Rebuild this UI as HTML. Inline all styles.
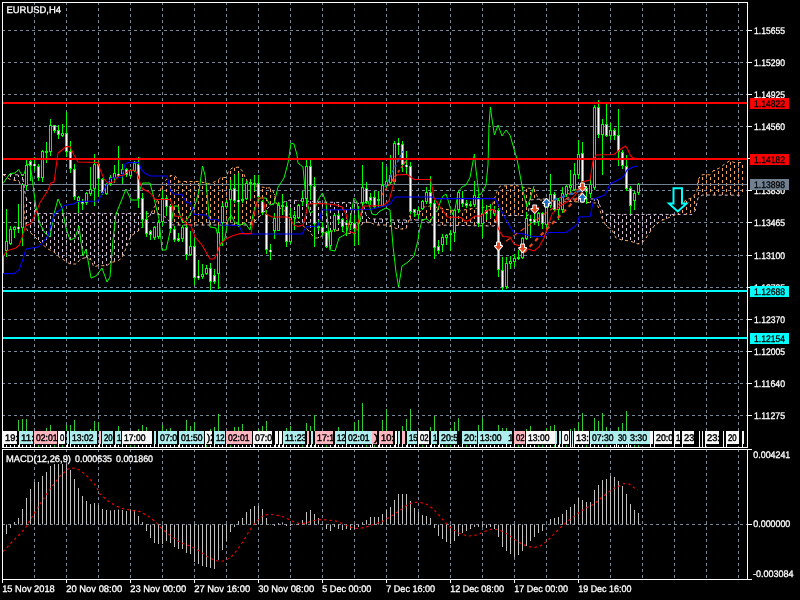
<!DOCTYPE html>
<html><head><meta charset="utf-8"><title>EURUSD,H4</title>
<style>
html,body{margin:0;padding:0;background:#000;width:800px;height:600px;overflow:hidden}
svg{display:block;font-family:"Liberation Sans",sans-serif;will-change:transform}
text{text-rendering:geometricPrecision}
text[fill="#fff"]{stroke:#fff;stroke-width:0.3px}
text[fill="#000"]:not([clip-path]){stroke:#000;stroke-width:0.3px}
</style></head><body>
<svg width="800" height="600" viewBox="0 0 800 600">
<rect width="800" height="600" fill="#000"/>
<path d="M34.5 3V447 M34.5 450V579 M66.5 3V447 M66.5 450V579 M98.5 3V447 M98.5 450V579 M130.5 3V447 M130.5 450V579 M162.5 3V447 M162.5 450V579 M194.5 3V447 M194.5 450V579 M226.5 3V447 M226.5 450V579 M258.5 3V447 M258.5 450V579 M290.5 3V447 M290.5 450V579 M322.5 3V447 M322.5 450V579 M354.5 3V447 M354.5 450V579 M386.5 3V447 M386.5 450V579 M418.5 3V447 M418.5 450V579 M450.5 3V447 M450.5 450V579 M482.5 3V447 M482.5 450V579 M514.5 3V447 M514.5 450V579 M546.5 3V447 M546.5 450V579 M578.5 3V447 M578.5 450V579 M610.5 3V447 M610.5 450V579 M642.5 3V447 M642.5 450V579 M674.5 3V447 M674.5 450V579 M706.5 3V447 M706.5 450V579 M738.5 3V447 M738.5 450V579 M3 30.5H747 M3 62.5H747 M3 94.5H747 M3 126.5H747 M3 158.5H747 M3 190.5H747 M3 222.5H747 M3 255.5H747 M3 287.5H747 M3 319.5H747 M3 351.5H747 M3 383.5H747 M3 415.5H747" stroke="#778899" stroke-width="1" stroke-dasharray="3 3" stroke-dashoffset="1" fill="none" shape-rendering="crispEdges"/>
<path d="M3 524.5H747" stroke="#778899" stroke-width="1" stroke-dasharray="3 3" stroke-dashoffset="1" fill="none" shape-rendering="crispEdges"/>
<path d="M6.5 174.6V176.6" stroke="#d8bfd8" stroke-width="1" stroke-dasharray="3 3" stroke-dashoffset="3.6" fill="none"/>
<path d="M10.5 174.7V179.5" stroke="#d8bfd8" stroke-width="1" stroke-dasharray="3 3" stroke-dashoffset="0.7" fill="none"/>
<path d="M14.5 174.8V180.2" stroke="#d8bfd8" stroke-width="1" stroke-dasharray="3 3" stroke-dashoffset="3.8" fill="none"/>
<path d="M18.5 174.9V180.8" stroke="#d8bfd8" stroke-width="1" stroke-dasharray="3 3" stroke-dashoffset="0.9" fill="none"/>
<path d="M22.5 175.0V190.0" stroke="#d8bfd8" stroke-width="1" stroke-dasharray="3 3" stroke-dashoffset="4.0" fill="none"/>
<path d="M26.5 197.0V224.0" stroke="#d8bfd8" stroke-width="1" stroke-dasharray="3 3" stroke-dashoffset="5.0" fill="none"/>
<path d="M30.5 202.5V232.4" stroke="#d8bfd8" stroke-width="1" stroke-dasharray="3 3" stroke-dashoffset="1.5" fill="none"/>
<path d="M34.5 203.2V236.0" stroke="#d8bfd8" stroke-width="1" stroke-dasharray="3 3" stroke-dashoffset="5.2" fill="none"/>
<path d="M38.5 213.6V240.0" stroke="#d8bfd8" stroke-width="1" stroke-dasharray="3 3" stroke-dashoffset="0.6" fill="none"/>
<path d="M42.5 213.6V244.0" stroke="#d8bfd8" stroke-width="1" stroke-dasharray="3 3" stroke-dashoffset="3.6" fill="none"/>
<path d="M46.5 213.6V247.3" stroke="#d8bfd8" stroke-width="1" stroke-dasharray="3 3" stroke-dashoffset="0.6" fill="none"/>
<path d="M50.5 213.6V250.0" stroke="#d8bfd8" stroke-width="1" stroke-dasharray="3 3" stroke-dashoffset="3.6" fill="none"/>
<path d="M54.5 213.6V252.0" stroke="#d8bfd8" stroke-width="1" stroke-dasharray="3 3" stroke-dashoffset="0.6" fill="none"/>
<path d="M58.5 213.6V255.7" stroke="#d8bfd8" stroke-width="1" stroke-dasharray="3 3" stroke-dashoffset="3.6" fill="none"/>
<path d="M62.5 213.6V258.8" stroke="#d8bfd8" stroke-width="1" stroke-dasharray="3 3" stroke-dashoffset="0.6" fill="none"/>
<path d="M66.5 213.6V261.3" stroke="#d8bfd8" stroke-width="1" stroke-dasharray="3 3" stroke-dashoffset="3.6" fill="none"/>
<path d="M70.5 213.6V264.0" stroke="#d8bfd8" stroke-width="1" stroke-dasharray="3 3" stroke-dashoffset="0.6" fill="none"/>
<path d="M74.5 213.6V264.0" stroke="#d8bfd8" stroke-width="1" stroke-dasharray="3 3" stroke-dashoffset="3.6" fill="none"/>
<path d="M78.5 213.6V261.8" stroke="#d8bfd8" stroke-width="1" stroke-dasharray="3 3" stroke-dashoffset="0.6" fill="none"/>
<path d="M82.5 213.6V258.6" stroke="#d8bfd8" stroke-width="1" stroke-dasharray="3 3" stroke-dashoffset="3.6" fill="none"/>
<path d="M86.5 213.6V257.6" stroke="#d8bfd8" stroke-width="1" stroke-dasharray="3 3" stroke-dashoffset="0.6" fill="none"/>
<path d="M90.5 213.6V259.4" stroke="#d8bfd8" stroke-width="1" stroke-dasharray="3 3" stroke-dashoffset="3.6" fill="none"/>
<path d="M94.5 213.6V266.7" stroke="#d8bfd8" stroke-width="1" stroke-dasharray="3 3" stroke-dashoffset="0.6" fill="none"/>
<path d="M98.5 213.6V265.7" stroke="#d8bfd8" stroke-width="1" stroke-dasharray="3 3" stroke-dashoffset="3.6" fill="none"/>
<path d="M102.5 213.6V265.7" stroke="#d8bfd8" stroke-width="1" stroke-dasharray="3 3" stroke-dashoffset="0.6" fill="none"/>
<path d="M106.5 213.6V265.7" stroke="#d8bfd8" stroke-width="1" stroke-dasharray="3 3" stroke-dashoffset="3.6" fill="none"/>
<path d="M110.5 213.6V263.2" stroke="#d8bfd8" stroke-width="1" stroke-dasharray="3 3" stroke-dashoffset="0.6" fill="none"/>
<path d="M114.5 213.6V261.8" stroke="#d8bfd8" stroke-width="1" stroke-dasharray="3 3" stroke-dashoffset="3.6" fill="none"/>
<path d="M118.5 213.6V260.7" stroke="#d8bfd8" stroke-width="1" stroke-dasharray="3 3" stroke-dashoffset="0.6" fill="none"/>
<path d="M122.5 213.6V258.0" stroke="#d8bfd8" stroke-width="1" stroke-dasharray="3 3" stroke-dashoffset="3.6" fill="none"/>
<path d="M126.5 213.6V248.2" stroke="#d8bfd8" stroke-width="1" stroke-dasharray="3 3" stroke-dashoffset="0.6" fill="none"/>
<path d="M130.5 213.6V237.8" stroke="#d8bfd8" stroke-width="1" stroke-dasharray="3 3" stroke-dashoffset="3.6" fill="none"/>
<path d="M134.5 213.6V233.9" stroke="#d8bfd8" stroke-width="1" stroke-dasharray="3 3" stroke-dashoffset="0.6" fill="none"/>
<path d="M138.5 213.6V231.0" stroke="#d8bfd8" stroke-width="1" stroke-dasharray="3 3" stroke-dashoffset="3.6" fill="none"/>
<path d="M142.5 213.6V227.3" stroke="#d8bfd8" stroke-width="1" stroke-dasharray="3 3" stroke-dashoffset="0.6" fill="none"/>
<path d="M146.5 213.6V220.5" stroke="#d8bfd8" stroke-width="1" stroke-dasharray="3 3" stroke-dashoffset="3.6" fill="none"/>
<path d="M150.5 213.6V215.5" stroke="#d8bfd8" stroke-width="1" stroke-dasharray="3 3" stroke-dashoffset="0.6" fill="none"/>
<path d="M154.5 207.6V213.6" stroke="#f4a460" stroke-width="1" stroke-dasharray="3 3" stroke-dashoffset="3.6" fill="none"/>
<path d="M158.5 198.5V214.4" stroke="#f4a460" stroke-width="1" stroke-dasharray="3 3" stroke-dashoffset="3.5" fill="none"/>
<path d="M162.5 184.0V215.5" stroke="#f4a460" stroke-width="1" stroke-dasharray="3 3" stroke-dashoffset="4.0" fill="none"/>
<path d="M166.5 180.0V217.5" stroke="#f4a460" stroke-width="1" stroke-dasharray="3 3" stroke-dashoffset="3.0" fill="none"/>
<path d="M170.5 175.6V222.1" stroke="#f4a460" stroke-width="1" stroke-dasharray="3 3" stroke-dashoffset="1.6" fill="none"/>
<path d="M174.5 175.6V225.0" stroke="#f4a460" stroke-width="1" stroke-dasharray="3 3" stroke-dashoffset="4.6" fill="none"/>
<path d="M178.5 180.0V225.0" stroke="#f4a460" stroke-width="1" stroke-dasharray="3 3" stroke-dashoffset="0.0" fill="none"/>
<path d="M182.5 181.6V225.0" stroke="#f4a460" stroke-width="1" stroke-dasharray="3 3" stroke-dashoffset="4.6" fill="none"/>
<path d="M186.5 181.5V225.0" stroke="#f4a460" stroke-width="1" stroke-dasharray="3 3" stroke-dashoffset="1.5" fill="none"/>
<path d="M190.5 181.5V225.0" stroke="#f4a460" stroke-width="1" stroke-dasharray="3 3" stroke-dashoffset="4.5" fill="none"/>
<path d="M194.5 181.5V225.0" stroke="#f4a460" stroke-width="1" stroke-dasharray="3 3" stroke-dashoffset="1.5" fill="none"/>
<path d="M198.5 181.5V225.0" stroke="#f4a460" stroke-width="1" stroke-dasharray="3 3" stroke-dashoffset="4.5" fill="none"/>
<path d="M202.5 182.1V225.0" stroke="#f4a460" stroke-width="1" stroke-dasharray="3 3" stroke-dashoffset="2.1" fill="none"/>
<path d="M206.5 183.0V225.0" stroke="#f4a460" stroke-width="1" stroke-dasharray="3 3" stroke-dashoffset="0.0" fill="none"/>
<path d="M210.5 184.0V225.0" stroke="#f4a460" stroke-width="1" stroke-dasharray="3 3" stroke-dashoffset="4.0" fill="none"/>
<path d="M214.5 182.0V225.0" stroke="#f4a460" stroke-width="1" stroke-dasharray="3 3" stroke-dashoffset="5.0" fill="none"/>
<path d="M218.5 180.2V225.0" stroke="#f4a460" stroke-width="1" stroke-dasharray="3 3" stroke-dashoffset="0.2" fill="none"/>
<path d="M222.5 177.5V225.0" stroke="#f4a460" stroke-width="1" stroke-dasharray="3 3" stroke-dashoffset="0.5" fill="none"/>
<path d="M226.5 177.5V225.0" stroke="#f4a460" stroke-width="1" stroke-dasharray="3 3" stroke-dashoffset="3.5" fill="none"/>
<path d="M230.5 170.0V225.0" stroke="#f4a460" stroke-width="1" stroke-dasharray="3 3" stroke-dashoffset="5.0" fill="none"/>
<path d="M234.5 167.7V225.0" stroke="#f4a460" stroke-width="1" stroke-dasharray="3 3" stroke-dashoffset="5.7" fill="none"/>
<path d="M238.5 167.1V225.0" stroke="#f4a460" stroke-width="1" stroke-dasharray="3 3" stroke-dashoffset="2.1" fill="none"/>
<path d="M242.5 170.8V225.0" stroke="#f4a460" stroke-width="1" stroke-dasharray="3 3" stroke-dashoffset="2.8" fill="none"/>
<path d="M246.5 179.0V225.0" stroke="#f4a460" stroke-width="1" stroke-dasharray="3 3" stroke-dashoffset="2.0" fill="none"/>
<path d="M250.5 183.8V225.0" stroke="#f4a460" stroke-width="1" stroke-dasharray="3 3" stroke-dashoffset="3.8" fill="none"/>
<path d="M254.5 185.2V222.0" stroke="#f4a460" stroke-width="1" stroke-dasharray="3 3" stroke-dashoffset="2.2" fill="none"/>
<path d="M258.5 186.3V218.0" stroke="#f4a460" stroke-width="1" stroke-dasharray="3 3" stroke-dashoffset="0.3" fill="none"/>
<path d="M262.5 187.1V214.0" stroke="#f4a460" stroke-width="1" stroke-dasharray="3 3" stroke-dashoffset="4.1" fill="none"/>
<path d="M266.5 187.6V210.0" stroke="#f4a460" stroke-width="1" stroke-dasharray="3 3" stroke-dashoffset="1.6" fill="none"/>
<path d="M270.5 188.0V206.0" stroke="#f4a460" stroke-width="1" stroke-dasharray="3 3" stroke-dashoffset="5.0" fill="none"/>
<path d="M274.5 194.0V204.0" stroke="#f4a460" stroke-width="1" stroke-dasharray="3 3" stroke-dashoffset="2.0" fill="none"/>
<path d="M278.5 204.0V205.5" stroke="#d8bfd8" stroke-width="1" stroke-dasharray="3 3" stroke-dashoffset="3.0" fill="none"/>
<path d="M282.5 203.0V209.2" stroke="#d8bfd8" stroke-width="1" stroke-dasharray="3 3" stroke-dashoffset="5.0" fill="none"/>
<path d="M286.5 201.3V211.8" stroke="#d8bfd8" stroke-width="1" stroke-dasharray="3 3" stroke-dashoffset="0.3" fill="none"/>
<path d="M290.5 200.0V214.5" stroke="#d8bfd8" stroke-width="1" stroke-dasharray="3 3" stroke-dashoffset="2.0" fill="none"/>
<path d="M294.5 200.3V217.5" stroke="#d8bfd8" stroke-width="1" stroke-dasharray="3 3" stroke-dashoffset="5.3" fill="none"/>
<path d="M298.5 200.5V221.0" stroke="#d8bfd8" stroke-width="1" stroke-dasharray="3 3" stroke-dashoffset="2.5" fill="none"/>
<path d="M302.5 200.8V224.8" stroke="#d8bfd8" stroke-width="1" stroke-dasharray="3 3" stroke-dashoffset="5.8" fill="none"/>
<path d="M306.5 201.1V228.4" stroke="#d8bfd8" stroke-width="1" stroke-dasharray="3 3" stroke-dashoffset="3.1" fill="none"/>
<path d="M310.5 201.3V232.0" stroke="#d8bfd8" stroke-width="1" stroke-dasharray="3 3" stroke-dashoffset="0.3" fill="none"/>
<path d="M314.5 201.6V238.0" stroke="#d8bfd8" stroke-width="1" stroke-dasharray="3 3" stroke-dashoffset="3.6" fill="none"/>
<path d="M318.5 201.9V238.0" stroke="#d8bfd8" stroke-width="1" stroke-dasharray="3 3" stroke-dashoffset="0.9" fill="none"/>
<path d="M322.5 202.0V235.5" stroke="#d8bfd8" stroke-width="1" stroke-dasharray="3 3" stroke-dashoffset="4.0" fill="none"/>
<path d="M326.5 202.1V232.5" stroke="#d8bfd8" stroke-width="1" stroke-dasharray="3 3" stroke-dashoffset="1.1" fill="none"/>
<path d="M330.5 202.2V231.5" stroke="#d8bfd8" stroke-width="1" stroke-dasharray="3 3" stroke-dashoffset="4.2" fill="none"/>
<path d="M334.5 202.3V230.8" stroke="#d8bfd8" stroke-width="1" stroke-dasharray="3 3" stroke-dashoffset="1.3" fill="none"/>
<path d="M338.5 202.4V230.2" stroke="#d8bfd8" stroke-width="1" stroke-dasharray="3 3" stroke-dashoffset="4.4" fill="none"/>
<path d="M342.5 202.5V231.0" stroke="#d8bfd8" stroke-width="1" stroke-dasharray="3 3" stroke-dashoffset="1.5" fill="none"/>
<path d="M346.5 202.6V233.0" stroke="#d8bfd8" stroke-width="1" stroke-dasharray="3 3" stroke-dashoffset="4.6" fill="none"/>
<path d="M350.5 202.7V233.4" stroke="#d8bfd8" stroke-width="1" stroke-dasharray="3 3" stroke-dashoffset="1.7" fill="none"/>
<path d="M354.5 202.8V233.9" stroke="#d8bfd8" stroke-width="1" stroke-dasharray="3 3" stroke-dashoffset="4.8" fill="none"/>
<path d="M358.5 202.9V229.5" stroke="#d8bfd8" stroke-width="1" stroke-dasharray="3 3" stroke-dashoffset="1.9" fill="none"/>
<path d="M362.5 203.0V224.2" stroke="#d8bfd8" stroke-width="1" stroke-dasharray="3 3" stroke-dashoffset="5.0" fill="none"/>
<path d="M366.5 215.0V222.5" stroke="#d8bfd8" stroke-width="1" stroke-dasharray="3 3" stroke-dashoffset="2.0" fill="none"/>
<path d="M370.5 219.0V222.4" stroke="#d8bfd8" stroke-width="1" stroke-dasharray="3 3" stroke-dashoffset="3.0" fill="none"/>
<path d="M374.5 219.0V224.1" stroke="#d8bfd8" stroke-width="1" stroke-dasharray="3 3" stroke-dashoffset="0.0" fill="none"/>
<path d="M378.5 219.0V225.0" stroke="#d8bfd8" stroke-width="1" stroke-dasharray="3 3" stroke-dashoffset="3.0" fill="none"/>
<path d="M382.5 219.0V225.0" stroke="#d8bfd8" stroke-width="1" stroke-dasharray="3 3" stroke-dashoffset="0.0" fill="none"/>
<path d="M386.5 219.0V225.0" stroke="#d8bfd8" stroke-width="1" stroke-dasharray="3 3" stroke-dashoffset="3.0" fill="none"/>
<path d="M390.5 219.5V226.3" stroke="#d8bfd8" stroke-width="1" stroke-dasharray="3 3" stroke-dashoffset="0.5" fill="none"/>
<path d="M394.5 220.0V227.7" stroke="#d8bfd8" stroke-width="1" stroke-dasharray="3 3" stroke-dashoffset="4.0" fill="none"/>
<path d="M398.5 220.0V229.0" stroke="#d8bfd8" stroke-width="1" stroke-dasharray="3 3" stroke-dashoffset="1.0" fill="none"/>
<path d="M402.5 220.0V229.0" stroke="#d8bfd8" stroke-width="1" stroke-dasharray="3 3" stroke-dashoffset="4.0" fill="none"/>
<path d="M406.5 220.0V229.0" stroke="#d8bfd8" stroke-width="1" stroke-dasharray="3 3" stroke-dashoffset="1.0" fill="none"/>
<path d="M410.5 215.0V220.0" stroke="#f4a460" stroke-width="1" stroke-dasharray="3 3" stroke-dashoffset="5.0" fill="none"/>
<path d="M414.5 215.0V220.0" stroke="#f4a460" stroke-width="1" stroke-dasharray="3 3" stroke-dashoffset="2.0" fill="none"/>
<path d="M418.5 213.5V220.0" stroke="#f4a460" stroke-width="1" stroke-dasharray="3 3" stroke-dashoffset="3.5" fill="none"/>
<path d="M422.5 209.5V220.0" stroke="#f4a460" stroke-width="1" stroke-dasharray="3 3" stroke-dashoffset="2.5" fill="none"/>
<path d="M426.5 206.7V221.2" stroke="#f4a460" stroke-width="1" stroke-dasharray="3 3" stroke-dashoffset="2.7" fill="none"/>
<path d="M430.5 206.0V223.8" stroke="#f4a460" stroke-width="1" stroke-dasharray="3 3" stroke-dashoffset="5.0" fill="none"/>
<path d="M434.5 206.8V225.0" stroke="#f4a460" stroke-width="1" stroke-dasharray="3 3" stroke-dashoffset="2.8" fill="none"/>
<path d="M438.5 207.6V225.1" stroke="#f4a460" stroke-width="1" stroke-dasharray="3 3" stroke-dashoffset="0.6" fill="none"/>
<path d="M442.5 208.4V225.2" stroke="#f4a460" stroke-width="1" stroke-dasharray="3 3" stroke-dashoffset="4.4" fill="none"/>
<path d="M446.5 209.2V225.2" stroke="#f4a460" stroke-width="1" stroke-dasharray="3 3" stroke-dashoffset="2.2" fill="none"/>
<path d="M450.5 210.0V225.3" stroke="#f4a460" stroke-width="1" stroke-dasharray="3 3" stroke-dashoffset="0.0" fill="none"/>
<path d="M454.5 210.4V225.4" stroke="#f4a460" stroke-width="1" stroke-dasharray="3 3" stroke-dashoffset="3.4" fill="none"/>
<path d="M458.5 210.8V225.4" stroke="#f4a460" stroke-width="1" stroke-dasharray="3 3" stroke-dashoffset="0.8" fill="none"/>
<path d="M462.5 210.5V225.5" stroke="#f4a460" stroke-width="1" stroke-dasharray="3 3" stroke-dashoffset="3.5" fill="none"/>
<path d="M466.5 209.5V225.6" stroke="#f4a460" stroke-width="1" stroke-dasharray="3 3" stroke-dashoffset="5.5" fill="none"/>
<path d="M470.5 208.8V225.6" stroke="#f4a460" stroke-width="1" stroke-dasharray="3 3" stroke-dashoffset="1.8" fill="none"/>
<path d="M474.5 208.5V225.7" stroke="#f4a460" stroke-width="1" stroke-dasharray="3 3" stroke-dashoffset="4.5" fill="none"/>
<path d="M478.5 208.2V225.8" stroke="#f4a460" stroke-width="1" stroke-dasharray="3 3" stroke-dashoffset="1.2" fill="none"/>
<path d="M482.5 207.7V225.8" stroke="#f4a460" stroke-width="1" stroke-dasharray="3 3" stroke-dashoffset="3.7" fill="none"/>
<path d="M486.5 207.0V225.9" stroke="#f4a460" stroke-width="1" stroke-dasharray="3 3" stroke-dashoffset="0.0" fill="none"/>
<path d="M490.5 206.3V225.9" stroke="#f4a460" stroke-width="1" stroke-dasharray="3 3" stroke-dashoffset="2.3" fill="none"/>
<path d="M494.5 200.2V226.0" stroke="#f4a460" stroke-width="1" stroke-dasharray="3 3" stroke-dashoffset="5.2" fill="none"/>
<path d="M498.5 189.7V215.5" stroke="#f4a460" stroke-width="1" stroke-dasharray="3 3" stroke-dashoffset="3.7" fill="none"/>
<path d="M502.5 186.1V215.5" stroke="#f4a460" stroke-width="1" stroke-dasharray="3 3" stroke-dashoffset="3.1" fill="none"/>
<path d="M506.5 185.9V215.5" stroke="#f4a460" stroke-width="1" stroke-dasharray="3 3" stroke-dashoffset="5.9" fill="none"/>
<path d="M510.5 185.8V215.5" stroke="#f4a460" stroke-width="1" stroke-dasharray="3 3" stroke-dashoffset="2.8" fill="none"/>
<path d="M514.5 185.6V215.5" stroke="#f4a460" stroke-width="1" stroke-dasharray="3 3" stroke-dashoffset="5.6" fill="none"/>
<path d="M518.5 186.0V215.5" stroke="#f4a460" stroke-width="1" stroke-dasharray="3 3" stroke-dashoffset="3.0" fill="none"/>
<path d="M522.5 187.0V215.5" stroke="#f4a460" stroke-width="1" stroke-dasharray="3 3" stroke-dashoffset="1.0" fill="none"/>
<path d="M526.5 187.8V215.5" stroke="#f4a460" stroke-width="1" stroke-dasharray="3 3" stroke-dashoffset="4.8" fill="none"/>
<path d="M530.5 188.4V200.0" stroke="#f4a460" stroke-width="1" stroke-dasharray="3 3" stroke-dashoffset="2.4" fill="none"/>
<path d="M534.5 189.0V199.6" stroke="#f4a460" stroke-width="1" stroke-dasharray="3 3" stroke-dashoffset="0.0" fill="none"/>
<path d="M550.5 199.0V200.5" stroke="#d8bfd8" stroke-width="1" stroke-dasharray="3 3" stroke-dashoffset="4.0" fill="none"/>
<path d="M554.5 199.0V200.7" stroke="#d8bfd8" stroke-width="1" stroke-dasharray="3 3" stroke-dashoffset="1.0" fill="none"/>
<path d="M558.5 199.0V200.9" stroke="#d8bfd8" stroke-width="1" stroke-dasharray="3 3" stroke-dashoffset="4.0" fill="none"/>
<path d="M562.5 199.0V201.1" stroke="#d8bfd8" stroke-width="1" stroke-dasharray="3 3" stroke-dashoffset="1.0" fill="none"/>
<path d="M566.5 199.0V201.3" stroke="#d8bfd8" stroke-width="1" stroke-dasharray="3 3" stroke-dashoffset="4.0" fill="none"/>
<path d="M570.5 199.0V201.5" stroke="#d8bfd8" stroke-width="1" stroke-dasharray="3 3" stroke-dashoffset="1.0" fill="none"/>
<path d="M574.5 199.0V201.7" stroke="#d8bfd8" stroke-width="1" stroke-dasharray="3 3" stroke-dashoffset="4.0" fill="none"/>
<path d="M578.5 199.0V201.9" stroke="#d8bfd8" stroke-width="1" stroke-dasharray="3 3" stroke-dashoffset="1.0" fill="none"/>
<path d="M582.5 199.0V202.1" stroke="#d8bfd8" stroke-width="1" stroke-dasharray="3 3" stroke-dashoffset="4.0" fill="none"/>
<path d="M586.5 199.0V202.4" stroke="#d8bfd8" stroke-width="1" stroke-dasharray="3 3" stroke-dashoffset="1.0" fill="none"/>
<path d="M590.5 199.0V202.6" stroke="#d8bfd8" stroke-width="1" stroke-dasharray="3 3" stroke-dashoffset="4.0" fill="none"/>
<path d="M594.5 199.0V202.9" stroke="#d8bfd8" stroke-width="1" stroke-dasharray="3 3" stroke-dashoffset="1.0" fill="none"/>
<path d="M598.5 200.0V206.5" stroke="#d8bfd8" stroke-width="1" stroke-dasharray="3 3" stroke-dashoffset="5.0" fill="none"/>
<path d="M602.5 210.0V218.0" stroke="#d8bfd8" stroke-width="1" stroke-dasharray="3 3" stroke-dashoffset="0.0" fill="none"/>
<path d="M606.5 214.4V226.0" stroke="#d8bfd8" stroke-width="1" stroke-dasharray="3 3" stroke-dashoffset="1.4" fill="none"/>
<path d="M610.5 214.4V228.7" stroke="#d8bfd8" stroke-width="1" stroke-dasharray="3 3" stroke-dashoffset="4.4" fill="none"/>
<path d="M614.5 214.4V234.0" stroke="#d8bfd8" stroke-width="1" stroke-dasharray="3 3" stroke-dashoffset="1.4" fill="none"/>
<path d="M618.5 214.4V238.7" stroke="#d8bfd8" stroke-width="1" stroke-dasharray="3 3" stroke-dashoffset="4.4" fill="none"/>
<path d="M622.5 214.4V240.0" stroke="#d8bfd8" stroke-width="1" stroke-dasharray="3 3" stroke-dashoffset="1.4" fill="none"/>
<path d="M626.5 214.4V240.5" stroke="#d8bfd8" stroke-width="1" stroke-dasharray="3 3" stroke-dashoffset="4.4" fill="none"/>
<path d="M630.5 214.4V241.0" stroke="#d8bfd8" stroke-width="1" stroke-dasharray="3 3" stroke-dashoffset="1.4" fill="none"/>
<path d="M634.5 214.4V242.5" stroke="#d8bfd8" stroke-width="1" stroke-dasharray="3 3" stroke-dashoffset="4.4" fill="none"/>
<path d="M638.5 214.4V244.0" stroke="#d8bfd8" stroke-width="1" stroke-dasharray="3 3" stroke-dashoffset="1.4" fill="none"/>
<path d="M642.5 214.4V243.0" stroke="#d8bfd8" stroke-width="1" stroke-dasharray="3 3" stroke-dashoffset="4.4" fill="none"/>
<path d="M646.5 214.4V238.0" stroke="#d8bfd8" stroke-width="1" stroke-dasharray="3 3" stroke-dashoffset="1.4" fill="none"/>
<path d="M650.5 214.4V232.0" stroke="#d8bfd8" stroke-width="1" stroke-dasharray="3 3" stroke-dashoffset="4.4" fill="none"/>
<path d="M654.5 214.4V226.0" stroke="#d8bfd8" stroke-width="1" stroke-dasharray="3 3" stroke-dashoffset="1.4" fill="none"/>
<path d="M658.5 214.4V223.0" stroke="#d8bfd8" stroke-width="1" stroke-dasharray="3 3" stroke-dashoffset="4.4" fill="none"/>
<path d="M662.5 214.4V220.2" stroke="#d8bfd8" stroke-width="1" stroke-dasharray="3 3" stroke-dashoffset="1.4" fill="none"/>
<path d="M666.5 214.4V218.8" stroke="#d8bfd8" stroke-width="1" stroke-dasharray="3 3" stroke-dashoffset="4.4" fill="none"/>
<path d="M670.5 214.4V217.1" stroke="#d8bfd8" stroke-width="1" stroke-dasharray="3 3" stroke-dashoffset="1.4" fill="none"/>
<path d="M678.5 211.0V214.4" stroke="#f4a460" stroke-width="1" stroke-dasharray="3 3" stroke-dashoffset="4.0" fill="none"/>
<path d="M682.5 205.7V214.4" stroke="#f4a460" stroke-width="1" stroke-dasharray="3 3" stroke-dashoffset="1.7" fill="none"/>
<path d="M686.5 199.4V214.4" stroke="#f4a460" stroke-width="1" stroke-dasharray="3 3" stroke-dashoffset="4.4" fill="none"/>
<path d="M690.5 198.5V214.4" stroke="#f4a460" stroke-width="1" stroke-dasharray="3 3" stroke-dashoffset="0.5" fill="none"/>
<path d="M694.5 195.7V212.1" stroke="#f4a460" stroke-width="1" stroke-dasharray="3 3" stroke-dashoffset="0.7" fill="none"/>
<path d="M698.5 180.0V198.0" stroke="#f4a460" stroke-width="1" stroke-dasharray="3 3" stroke-dashoffset="0.0" fill="none"/>
<path d="M702.5 174.9V195.3" stroke="#f4a460" stroke-width="1" stroke-dasharray="3 3" stroke-dashoffset="3.9" fill="none"/>
<path d="M706.5 174.4V195.0" stroke="#f4a460" stroke-width="1" stroke-dasharray="3 3" stroke-dashoffset="0.4" fill="none"/>
<path d="M710.5 175.0V195.0" stroke="#f4a460" stroke-width="1" stroke-dasharray="3 3" stroke-dashoffset="4.0" fill="none"/>
<path d="M714.5 170.0V195.1" stroke="#f4a460" stroke-width="1" stroke-dasharray="3 3" stroke-dashoffset="2.0" fill="none"/>
<path d="M718.5 168.8V195.1" stroke="#f4a460" stroke-width="1" stroke-dasharray="3 3" stroke-dashoffset="3.8" fill="none"/>
<path d="M722.5 166.2V195.1" stroke="#f4a460" stroke-width="1" stroke-dasharray="3 3" stroke-dashoffset="4.2" fill="none"/>
<path d="M726.5 163.1V195.1" stroke="#f4a460" stroke-width="1" stroke-dasharray="3 3" stroke-dashoffset="4.1" fill="none"/>
<path d="M730.5 160.6V195.2" stroke="#f4a460" stroke-width="1" stroke-dasharray="3 3" stroke-dashoffset="4.6" fill="none"/>
<path d="M734.5 162.5V195.2" stroke="#f4a460" stroke-width="1" stroke-dasharray="3 3" stroke-dashoffset="3.5" fill="none"/>
<path d="M738.5 162.5V195.2" stroke="#f4a460" stroke-width="1" stroke-dasharray="3 3" stroke-dashoffset="0.5" fill="none"/>
<path d="M742.5 162.5V195.2" stroke="#f4a460" stroke-width="1" stroke-dasharray="3 3" stroke-dashoffset="3.5" fill="none"/>
<polyline points="3.0,174.5 10.0,179.5 19.0,181.0 20.0,184.0 22.0,190.0 23.5,200.0 24.0,210.0 25.0,218.0 27.0,230.0 32.0,234.0 37.0,239.0 42.0,244.0 48.0,249.0 54.0,252.0 60.0,257.6 64.0,260.0 70.0,264.0 76.0,264.0 80.6,259.0 86.0,257.6 91.4,260.0 93.6,266.8 98.0,265.7 106.6,265.7 111.0,262.5 117.5,261.0 122.0,258.0 124.0,252.7 127.0,246.0 130.5,236.4 138.0,231.0 141.0,229.0 144.0,224.0 148.0,217.0 150.6,215.0 152.5,210.0 155.0,206.0 157.0,201.0 159.0,196.0 160.6,190.0 162.0,184.0 166.0,180.0 170.0,175.6 175.0,175.6 178.0,180.0 179.0,182.0 182.5,181.5 199.0,181.5 206.0,183.0 210.0,184.0 214.0,182.0 217.5,180.6 221.0,177.5 226.0,177.5 228.0,172.0 232.0,168.0 239.0,167.0 243.0,172.0 245.0,177.0 248.0,183.0 256.0,186.0 264.0,187.4 270.0,188.0 273.0,191.0 275.0,197.0 276.0,203.0 280.0,208.0 288.0,213.0 296.0,219.0 300.0,223.0 310.0,232.0 314.0,238.0 320.0,238.0 324.0,233.0 332.0,231.0 340.0,230.0 346.0,233.0 355.0,234.0 359.0,228.0 363.0,223.0 369.0,222.0 376.0,225.0 386.0,225.0 398.0,229.0 406.0,229.0 408.0,223.0 410.0,215.0 416.0,215.0 420.0,212.0 424.0,207.0 430.0,206.0 440.0,208.0 450.0,210.0 460.0,211.0 468.0,209.0 480.0,208.0 492.0,206.0 497.0,191.5 500.0,186.2 516.0,185.5 524.0,187.5 534.0,189.0 538.0,198.0 540.0,200.0 560.0,201.0 580.0,202.0 596.0,203.0 600.0,210.0 602.0,218.0 606.0,226.0 612.0,230.0 616.0,238.0 622.0,240.0 630.0,241.0 638.0,244.0 642.0,243.0 646.0,238.0 650.0,232.0 654.0,226.0 658.0,223.0 661.0,220.6 666.0,218.8 675.0,215.0 682.5,205.0 686.0,199.4 692.5,198.0 697.0,191.0 698.0,180.0 701.0,175.0 706.0,174.4 710.0,175.0 714.0,170.0 718.0,168.8 721.0,167.0 725.0,163.8 730.0,160.6 734.0,162.5 742.0,162.5" stroke="#f4a460" stroke-width="1" fill="none" stroke-dasharray="3 3" />
<polyline points="3.0,174.5 23.0,175.0 23.1,180.0 24.0,185.0 25.0,193.0 26.5,199.0 29.0,202.5 33.0,202.5 35.0,204.0 36.0,213.0 37.0,213.6 154.0,213.6 161.0,215.0 166.0,217.5 169.0,221.0 172.5,225.0 250.0,225.0 254.0,222.0 262.0,214.0 272.0,204.0 280.0,204.0 284.0,202.0 290.0,200.0 320.0,202.0 363.0,203.0 366.0,215.0 370.0,219.0 388.0,219.0 392.0,220.0 408.0,220.0 424.0,220.0 432.0,225.0 480.0,225.8 494.0,226.0 498.0,215.5 528.0,215.5 530.0,200.0 540.0,199.0 596.0,199.0 598.0,200.0 600.0,206.0 603.0,212.0 606.0,214.4 692.0,214.4 695.0,211.0 697.0,202.5 698.0,198.0 702.5,195.0 742.0,195.2" stroke="#d8bfd8" stroke-width="1" fill="none" stroke-dasharray="3 3" />
<rect x="3" y="184" width="744" height="1" fill="#708090"/>
<polyline points="3.0,183.5 10.0,173.5 15.0,173.0 18.5,169.5 22.5,176.0 24.5,173.0 27.0,164.0 30.0,165.0 32.0,177.0 34.0,193.0 36.0,207.0 40.0,224.0 45.0,233.0 50.0,237.0 54.0,214.0 58.0,199.0 62.0,208.0 66.0,228.0 70.0,240.0 75.0,238.0 79.0,226.0 81.0,242.0 83.0,256.0 86.0,249.0 89.0,266.0 91.0,278.0 96.0,276.0 102.0,268.0 107.0,282.0 110.0,277.0 113.0,240.0 116.0,214.0 120.0,204.0 126.0,189.0 131.0,200.0 138.0,200.0 139.4,191.0 142.5,183.0 150.0,183.0 152.5,192.5 155.0,202.5 159.0,219.0 162.0,250.0 166.0,250.0 170.0,232.0 174.0,206.0 178.0,206.0 180.0,215.0 182.5,222.5 185.0,222.5 190.0,215.0 195.0,205.0 199.0,191.0 202.5,166.0 205.0,175.0 207.5,197.5 210.0,227.0 216.0,228.0 220.0,246.0 225.0,238.0 228.0,220.0 231.0,215.0 235.0,223.0 240.0,225.0 245.0,223.0 250.0,230.0 253.0,215.0 256.0,204.0 260.0,198.0 266.0,198.0 270.0,205.0 274.0,204.0 278.0,187.0 284.0,178.0 288.0,163.0 291.0,143.0 294.0,144.0 297.0,155.0 298.0,163.0 303.0,167.0 305.0,189.0 308.0,206.0 310.0,213.0 314.0,211.0 318.0,200.0 322.4,193.0 326.0,202.0 330.0,250.0 335.0,251.0 339.0,238.0 346.0,234.0 350.0,220.0 354.0,198.0 357.0,202.0 360.0,222.0 363.0,204.0 368.0,201.0 372.0,214.0 376.0,215.0 380.0,211.0 386.0,208.0 390.0,210.0 393.0,246.0 396.0,272.0 398.6,287.0 402.0,266.0 408.0,262.0 414.0,256.0 418.0,240.0 418.8,233.8 422.0,220.0 427.0,218.8 430.0,222.0 433.8,215.0 437.5,210.0 441.0,200.0 443.0,196.0 446.0,194.0 448.0,200.0 450.6,208.8 453.0,215.0 455.0,209.4 457.5,196.0 458.8,191.0 462.0,187.0 466.0,185.0 470.0,177.5 474.4,154.0 476.0,170.0 477.5,182.5 479.0,195.0 481.0,194.0 486.0,185.0 488.0,165.0 489.0,125.0 490.4,107.0 492.0,119.0 494.4,135.0 498.0,125.0 502.0,136.0 506.0,130.0 510.0,135.0 514.0,149.0 517.0,159.0 520.0,175.0 523.0,191.0 527.0,207.0 530.0,199.0 534.0,186.0" stroke="#00ff00" stroke-width="1.0" fill="none" />
<path d="M6.5 209V257 M10.5 226V245 M14.5 226V238 M18.5 204V233 M22.5 184V246 M26.5 160V190 M30.5 160V181 M34.5 157V171 M38.5 164V181 M42.5 150V182 M46.5 142V163 M50.5 119V156 M54.5 125V133 M58.5 125V139 M62.5 124V137 M66.5 112V157 M70.5 141V173 M74.5 164V200 M78.5 196V213 M82.5 199V210 M86.5 192V205 M90.5 167V196 M94.5 154V206 M98.5 161V197 M102.5 178V195 M106.5 183V195 M110.5 175V186 M114.5 165V183 M118.5 146V177 M122.5 164V184 M126.5 168V177 M130.5 169V178 M134.5 161V172 M138.5 157V208 M142.5 193V228 M146.5 211V237 M150.5 230V240 M154.5 226V240 M158.5 220V239 M162.5 190V226 M166.5 196V216 M170.5 205V233 M174.5 226V242 M178.5 233V242 M182.5 225V242 M186.5 225V260 M190.5 231V256 M194.5 238V285 M198.5 260V280 M202.5 264V279 M206.5 265V275 M210.5 263V292 M214.5 269V284 M218.5 225V289 M222.5 203V246 M226.5 200V208 M230.5 180V220 M234.5 175V203 M238.5 173V227 M242.5 178V203 M246.5 181V200 M250.5 179V199 M254.5 175V191 M258.5 175V199 M262.5 200V215 M266.5 210V254 M270.5 244V260 M274.5 213V239 M278.5 202V231 M282.5 194V215 M286.5 202V247 M290.5 208V244 M294.5 211V230 M298.5 204V219 M302.5 191V206 M306.5 160V204 M310.5 159V200 M314.5 177V247 M318.5 220V231 M322.5 222V236 M326.5 231V248 M330.5 230V249 M334.5 214V232 M338.5 213V224 M342.5 218V232 M346.5 220V236 M350.5 218V230 M354.5 215V246 M358.5 206V245 M362.5 165V204 M366.5 182V204 M370.5 193V205 M374.5 191V209 M378.5 191V207 M382.5 162V207 M386.5 167V188 M390.5 155V184 M394.5 141V184 M398.5 138V155 M402.5 141V172 M406.5 151V174 M410.5 162V214 M414.5 209V217 M418.5 207V219 M422.5 200V210 M426.5 187V204 M430.5 176V207 M434.5 200V259 M438.5 240V254 M442.5 234V252 M446.5 234V245 M450.5 230V251 M454.5 209V242 M458.5 191V213 M462.5 191V207 M466.5 200V208 M470.5 201V207 M474.5 181V207 M478.5 194V227 M482.5 199V238 M486.5 205V220 M490.5 204V218 M494.5 206V216 M498.5 208V277 M502.5 257V290 M506.5 257V289 M510.5 256V269 M514.5 254V267 M518.5 250V260 M522.5 237V259 M526.5 212V240 M530.5 215V238 M534.5 214V225 M538.5 212V226 M542.5 212V229 M546.5 205V231 M550.5 174V208 M554.5 192V212 M558.5 198V220 M562.5 187V213 M566.5 185V197 M570.5 170V195 M574.5 163V191 M578.5 140V179 M582.5 142V185 M586.5 186V204 M590.5 177V198 M594.5 105V190 M598.5 100V138 M602.5 119V175 M606.5 104V137 M610.5 123V140 M614.5 128V140 M618.5 109V166 M622.5 150V169 M626.5 155V191 M630.5 186V214 M634.5 191V210 M638.5 183V195" stroke="#00ff00" stroke-width="1" fill="none" shape-rendering="crispEdges"/>
<rect x="5" y="241" width="3" height="10" fill="#00ff00" shape-rendering="crispEdges"/>
<rect x="6" y="242" width="1" height="8" fill="#000" shape-rendering="crispEdges"/>
<rect x="9" y="229" width="3" height="15" fill="#00ff00" shape-rendering="crispEdges"/>
<rect x="10" y="230" width="1" height="13" fill="#000" shape-rendering="crispEdges"/>
<rect x="13" y="227" width="3" height="3" fill="#00ff00" shape-rendering="crispEdges"/>
<rect x="14" y="228" width="1" height="1" fill="#000" shape-rendering="crispEdges"/>
<rect x="21" y="184" width="3" height="44" fill="#00ff00" shape-rendering="crispEdges"/>
<rect x="22" y="185" width="1" height="42" fill="#000" shape-rendering="crispEdges"/>
<rect x="25" y="165" width="3" height="21" fill="#00ff00" shape-rendering="crispEdges"/>
<rect x="26" y="166" width="1" height="19" fill="#000" shape-rendering="crispEdges"/>
<rect x="41" y="151" width="3" height="27" fill="#00ff00" shape-rendering="crispEdges"/>
<rect x="42" y="152" width="1" height="25" fill="#000" shape-rendering="crispEdges"/>
<rect x="45" y="151" width="3" height="2" fill="#00ff00" shape-rendering="crispEdges"/>
<rect x="49" y="125" width="3" height="27" fill="#00ff00" shape-rendering="crispEdges"/>
<rect x="50" y="126" width="1" height="25" fill="#000" shape-rendering="crispEdges"/>
<rect x="61" y="133" width="3" height="3" fill="#00ff00" shape-rendering="crispEdges"/>
<rect x="62" y="134" width="1" height="1" fill="#000" shape-rendering="crispEdges"/>
<rect x="77" y="197" width="3" height="4" fill="#00ff00" shape-rendering="crispEdges"/>
<rect x="78" y="198" width="1" height="2" fill="#000" shape-rendering="crispEdges"/>
<rect x="85" y="193" width="3" height="10" fill="#00ff00" shape-rendering="crispEdges"/>
<rect x="86" y="194" width="1" height="8" fill="#000" shape-rendering="crispEdges"/>
<rect x="89" y="189" width="3" height="5" fill="#00ff00" shape-rendering="crispEdges"/>
<rect x="90" y="190" width="1" height="3" fill="#000" shape-rendering="crispEdges"/>
<rect x="93" y="164" width="3" height="25" fill="#00ff00" shape-rendering="crispEdges"/>
<rect x="94" y="165" width="1" height="23" fill="#000" shape-rendering="crispEdges"/>
<rect x="105" y="184" width="3" height="10" fill="#00ff00" shape-rendering="crispEdges"/>
<rect x="106" y="185" width="1" height="8" fill="#000" shape-rendering="crispEdges"/>
<rect x="109" y="177" width="3" height="7" fill="#00ff00" shape-rendering="crispEdges"/>
<rect x="110" y="178" width="1" height="5" fill="#000" shape-rendering="crispEdges"/>
<rect x="113" y="173" width="3" height="5" fill="#00ff00" shape-rendering="crispEdges"/>
<rect x="114" y="174" width="1" height="3" fill="#000" shape-rendering="crispEdges"/>
<rect x="121" y="169" width="3" height="5" fill="#00ff00" shape-rendering="crispEdges"/>
<rect x="122" y="170" width="1" height="3" fill="#000" shape-rendering="crispEdges"/>
<rect x="129" y="170" width="3" height="6" fill="#00ff00" shape-rendering="crispEdges"/>
<rect x="130" y="171" width="1" height="4" fill="#000" shape-rendering="crispEdges"/>
<rect x="133" y="163" width="3" height="8" fill="#00ff00" shape-rendering="crispEdges"/>
<rect x="134" y="164" width="1" height="6" fill="#000" shape-rendering="crispEdges"/>
<rect x="153" y="227" width="3" height="11" fill="#00ff00" shape-rendering="crispEdges"/>
<rect x="154" y="228" width="1" height="9" fill="#000" shape-rendering="crispEdges"/>
<rect x="157" y="222" width="3" height="15" fill="#00ff00" shape-rendering="crispEdges"/>
<rect x="158" y="223" width="1" height="13" fill="#000" shape-rendering="crispEdges"/>
<rect x="161" y="198" width="3" height="24" fill="#00ff00" shape-rendering="crispEdges"/>
<rect x="162" y="199" width="1" height="22" fill="#000" shape-rendering="crispEdges"/>
<rect x="181" y="227" width="3" height="12" fill="#00ff00" shape-rendering="crispEdges"/>
<rect x="182" y="228" width="1" height="10" fill="#000" shape-rendering="crispEdges"/>
<rect x="189" y="246" width="3" height="9" fill="#00ff00" shape-rendering="crispEdges"/>
<rect x="190" y="247" width="1" height="7" fill="#000" shape-rendering="crispEdges"/>
<rect x="201" y="274" width="3" height="3" fill="#00ff00" shape-rendering="crispEdges"/>
<rect x="202" y="275" width="1" height="1" fill="#000" shape-rendering="crispEdges"/>
<rect x="205" y="268" width="3" height="6" fill="#00ff00" shape-rendering="crispEdges"/>
<rect x="206" y="269" width="1" height="4" fill="#000" shape-rendering="crispEdges"/>
<rect x="217" y="232" width="3" height="42" fill="#00ff00" shape-rendering="crispEdges"/>
<rect x="218" y="233" width="1" height="40" fill="#000" shape-rendering="crispEdges"/>
<rect x="221" y="206" width="3" height="17" fill="#00ff00" shape-rendering="crispEdges"/>
<rect x="222" y="207" width="1" height="15" fill="#000" shape-rendering="crispEdges"/>
<rect x="225" y="202" width="3" height="5" fill="#00ff00" shape-rendering="crispEdges"/>
<rect x="226" y="203" width="1" height="3" fill="#000" shape-rendering="crispEdges"/>
<rect x="229" y="189" width="3" height="11" fill="#00ff00" shape-rendering="crispEdges"/>
<rect x="230" y="190" width="1" height="9" fill="#000" shape-rendering="crispEdges"/>
<rect x="241" y="199" width="3" height="2" fill="#00ff00" shape-rendering="crispEdges"/>
<rect x="245" y="183" width="3" height="16" fill="#00ff00" shape-rendering="crispEdges"/>
<rect x="246" y="184" width="1" height="14" fill="#000" shape-rendering="crispEdges"/>
<rect x="249" y="182" width="3" height="2" fill="#00ff00" shape-rendering="crispEdges"/>
<rect x="253" y="183" width="3" height="2" fill="#00ff00" shape-rendering="crispEdges"/>
<rect x="273" y="218" width="3" height="13" fill="#00ff00" shape-rendering="crispEdges"/>
<rect x="274" y="219" width="1" height="11" fill="#000" shape-rendering="crispEdges"/>
<rect x="277" y="205" width="3" height="26" fill="#00ff00" shape-rendering="crispEdges"/>
<rect x="278" y="206" width="1" height="24" fill="#000" shape-rendering="crispEdges"/>
<rect x="281" y="205" width="3" height="2" fill="#00ff00" shape-rendering="crispEdges"/>
<rect x="289" y="217" width="3" height="25" fill="#00ff00" shape-rendering="crispEdges"/>
<rect x="290" y="218" width="1" height="23" fill="#000" shape-rendering="crispEdges"/>
<rect x="293" y="215" width="3" height="3" fill="#00ff00" shape-rendering="crispEdges"/>
<rect x="294" y="216" width="1" height="1" fill="#000" shape-rendering="crispEdges"/>
<rect x="297" y="205" width="3" height="13" fill="#00ff00" shape-rendering="crispEdges"/>
<rect x="298" y="206" width="1" height="11" fill="#000" shape-rendering="crispEdges"/>
<rect x="301" y="198" width="3" height="4" fill="#00ff00" shape-rendering="crispEdges"/>
<rect x="302" y="199" width="1" height="2" fill="#000" shape-rendering="crispEdges"/>
<rect x="305" y="166" width="3" height="33" fill="#00ff00" shape-rendering="crispEdges"/>
<rect x="306" y="167" width="1" height="31" fill="#000" shape-rendering="crispEdges"/>
<rect x="317" y="226" width="3" height="2" fill="#00ff00" shape-rendering="crispEdges"/>
<rect x="329" y="231" width="3" height="15" fill="#00ff00" shape-rendering="crispEdges"/>
<rect x="330" y="232" width="1" height="13" fill="#000" shape-rendering="crispEdges"/>
<rect x="333" y="215" width="3" height="15" fill="#00ff00" shape-rendering="crispEdges"/>
<rect x="334" y="216" width="1" height="13" fill="#000" shape-rendering="crispEdges"/>
<rect x="349" y="222" width="3" height="3" fill="#00ff00" shape-rendering="crispEdges"/>
<rect x="350" y="223" width="1" height="1" fill="#000" shape-rendering="crispEdges"/>
<rect x="357" y="222" width="3" height="2" fill="#00ff00" shape-rendering="crispEdges"/>
<rect x="361" y="187" width="3" height="16" fill="#00ff00" shape-rendering="crispEdges"/>
<rect x="362" y="188" width="1" height="14" fill="#000" shape-rendering="crispEdges"/>
<rect x="377" y="199" width="3" height="2" fill="#00ff00" shape-rendering="crispEdges"/>
<rect x="381" y="185" width="3" height="21" fill="#00ff00" shape-rendering="crispEdges"/>
<rect x="382" y="186" width="1" height="19" fill="#000" shape-rendering="crispEdges"/>
<rect x="385" y="181" width="3" height="5" fill="#00ff00" shape-rendering="crispEdges"/>
<rect x="386" y="182" width="1" height="3" fill="#000" shape-rendering="crispEdges"/>
<rect x="389" y="175" width="3" height="8" fill="#00ff00" shape-rendering="crispEdges"/>
<rect x="390" y="176" width="1" height="6" fill="#000" shape-rendering="crispEdges"/>
<rect x="393" y="143" width="3" height="39" fill="#00ff00" shape-rendering="crispEdges"/>
<rect x="394" y="144" width="1" height="37" fill="#000" shape-rendering="crispEdges"/>
<rect x="417" y="210" width="3" height="5" fill="#00ff00" shape-rendering="crispEdges"/>
<rect x="418" y="211" width="1" height="3" fill="#000" shape-rendering="crispEdges"/>
<rect x="421" y="201" width="3" height="8" fill="#00ff00" shape-rendering="crispEdges"/>
<rect x="422" y="202" width="1" height="6" fill="#000" shape-rendering="crispEdges"/>
<rect x="425" y="192" width="3" height="10" fill="#00ff00" shape-rendering="crispEdges"/>
<rect x="426" y="193" width="1" height="8" fill="#000" shape-rendering="crispEdges"/>
<rect x="441" y="237" width="3" height="8" fill="#00ff00" shape-rendering="crispEdges"/>
<rect x="442" y="238" width="1" height="6" fill="#000" shape-rendering="crispEdges"/>
<rect x="445" y="235" width="3" height="3" fill="#00ff00" shape-rendering="crispEdges"/>
<rect x="446" y="236" width="1" height="1" fill="#000" shape-rendering="crispEdges"/>
<rect x="449" y="233" width="3" height="2" fill="#00ff00" shape-rendering="crispEdges"/>
<rect x="453" y="210" width="3" height="23" fill="#00ff00" shape-rendering="crispEdges"/>
<rect x="454" y="211" width="1" height="21" fill="#000" shape-rendering="crispEdges"/>
<rect x="457" y="192" width="3" height="18" fill="#00ff00" shape-rendering="crispEdges"/>
<rect x="458" y="193" width="1" height="16" fill="#000" shape-rendering="crispEdges"/>
<rect x="469" y="204" width="3" height="2" fill="#00ff00" shape-rendering="crispEdges"/>
<rect x="473" y="195" width="3" height="10" fill="#00ff00" shape-rendering="crispEdges"/>
<rect x="474" y="196" width="1" height="8" fill="#000" shape-rendering="crispEdges"/>
<rect x="481" y="213" width="3" height="11" fill="#00ff00" shape-rendering="crispEdges"/>
<rect x="482" y="214" width="1" height="9" fill="#000" shape-rendering="crispEdges"/>
<rect x="489" y="209" width="3" height="2" fill="#00ff00" shape-rendering="crispEdges"/>
<rect x="493" y="210" width="3" height="4" fill="#00ff00" shape-rendering="crispEdges"/>
<rect x="494" y="211" width="1" height="2" fill="#000" shape-rendering="crispEdges"/>
<rect x="505" y="263" width="3" height="24" fill="#00ff00" shape-rendering="crispEdges"/>
<rect x="506" y="264" width="1" height="22" fill="#000" shape-rendering="crispEdges"/>
<rect x="509" y="261" width="3" height="3" fill="#00ff00" shape-rendering="crispEdges"/>
<rect x="510" y="262" width="1" height="1" fill="#000" shape-rendering="crispEdges"/>
<rect x="513" y="258" width="3" height="4" fill="#00ff00" shape-rendering="crispEdges"/>
<rect x="514" y="259" width="1" height="2" fill="#000" shape-rendering="crispEdges"/>
<rect x="517" y="257" width="3" height="2" fill="#00ff00" shape-rendering="crispEdges"/>
<rect x="521" y="238" width="3" height="20" fill="#00ff00" shape-rendering="crispEdges"/>
<rect x="522" y="239" width="1" height="18" fill="#000" shape-rendering="crispEdges"/>
<rect x="525" y="218" width="3" height="21" fill="#00ff00" shape-rendering="crispEdges"/>
<rect x="526" y="219" width="1" height="19" fill="#000" shape-rendering="crispEdges"/>
<rect x="537" y="213" width="3" height="9" fill="#00ff00" shape-rendering="crispEdges"/>
<rect x="538" y="214" width="1" height="7" fill="#000" shape-rendering="crispEdges"/>
<rect x="545" y="207" width="3" height="18" fill="#00ff00" shape-rendering="crispEdges"/>
<rect x="546" y="208" width="1" height="16" fill="#000" shape-rendering="crispEdges"/>
<rect x="549" y="194" width="3" height="12" fill="#00ff00" shape-rendering="crispEdges"/>
<rect x="550" y="195" width="1" height="10" fill="#000" shape-rendering="crispEdges"/>
<rect x="557" y="200" width="3" height="10" fill="#00ff00" shape-rendering="crispEdges"/>
<rect x="558" y="201" width="1" height="8" fill="#000" shape-rendering="crispEdges"/>
<rect x="561" y="193" width="3" height="17" fill="#00ff00" shape-rendering="crispEdges"/>
<rect x="562" y="194" width="1" height="15" fill="#000" shape-rendering="crispEdges"/>
<rect x="565" y="186" width="3" height="9" fill="#00ff00" shape-rendering="crispEdges"/>
<rect x="566" y="187" width="1" height="7" fill="#000" shape-rendering="crispEdges"/>
<rect x="569" y="185" width="3" height="3" fill="#00ff00" shape-rendering="crispEdges"/>
<rect x="570" y="186" width="1" height="1" fill="#000" shape-rendering="crispEdges"/>
<rect x="573" y="174" width="3" height="16" fill="#00ff00" shape-rendering="crispEdges"/>
<rect x="574" y="175" width="1" height="14" fill="#000" shape-rendering="crispEdges"/>
<rect x="577" y="154" width="3" height="21" fill="#00ff00" shape-rendering="crispEdges"/>
<rect x="578" y="155" width="1" height="19" fill="#000" shape-rendering="crispEdges"/>
<rect x="589" y="184" width="3" height="10" fill="#00ff00" shape-rendering="crispEdges"/>
<rect x="590" y="185" width="1" height="8" fill="#000" shape-rendering="crispEdges"/>
<rect x="593" y="107" width="3" height="81" fill="#00ff00" shape-rendering="crispEdges"/>
<rect x="594" y="108" width="1" height="79" fill="#000" shape-rendering="crispEdges"/>
<rect x="601" y="124" width="3" height="11" fill="#00ff00" shape-rendering="crispEdges"/>
<rect x="602" y="125" width="1" height="9" fill="#000" shape-rendering="crispEdges"/>
<rect x="609" y="130" width="3" height="6" fill="#00ff00" shape-rendering="crispEdges"/>
<rect x="610" y="131" width="1" height="4" fill="#000" shape-rendering="crispEdges"/>
<rect x="633" y="193" width="3" height="8" fill="#00ff00" shape-rendering="crispEdges"/>
<rect x="634" y="194" width="1" height="6" fill="#000" shape-rendering="crispEdges"/>
<rect x="637" y="184" width="3" height="9" fill="#00ff00" shape-rendering="crispEdges"/>
<rect x="638" y="185" width="1" height="7" fill="#000" shape-rendering="crispEdges"/>
<rect x="17" y="227" width="3" height="2" fill="#00ff00" shape-rendering="crispEdges"/>
<rect x="18" y="227" width="1" height="2" fill="#fff" shape-rendering="crispEdges"/>
<rect x="29" y="161" width="3" height="5" fill="#00ff00" shape-rendering="crispEdges"/>
<rect x="30" y="162" width="1" height="3" fill="#fff" shape-rendering="crispEdges"/>
<rect x="33" y="164" width="3" height="2" fill="#00ff00" shape-rendering="crispEdges"/>
<rect x="34" y="164" width="1" height="2" fill="#fff" shape-rendering="crispEdges"/>
<rect x="37" y="166" width="3" height="12" fill="#00ff00" shape-rendering="crispEdges"/>
<rect x="38" y="167" width="1" height="10" fill="#fff" shape-rendering="crispEdges"/>
<rect x="53" y="125" width="3" height="6" fill="#00ff00" shape-rendering="crispEdges"/>
<rect x="54" y="126" width="1" height="4" fill="#fff" shape-rendering="crispEdges"/>
<rect x="57" y="130" width="3" height="5" fill="#00ff00" shape-rendering="crispEdges"/>
<rect x="58" y="131" width="1" height="3" fill="#fff" shape-rendering="crispEdges"/>
<rect x="65" y="133" width="3" height="19" fill="#00ff00" shape-rendering="crispEdges"/>
<rect x="66" y="134" width="1" height="17" fill="#fff" shape-rendering="crispEdges"/>
<rect x="69" y="151" width="3" height="18" fill="#00ff00" shape-rendering="crispEdges"/>
<rect x="70" y="152" width="1" height="16" fill="#fff" shape-rendering="crispEdges"/>
<rect x="73" y="169" width="3" height="28" fill="#00ff00" shape-rendering="crispEdges"/>
<rect x="74" y="170" width="1" height="26" fill="#fff" shape-rendering="crispEdges"/>
<rect x="81" y="201" width="3" height="3" fill="#00ff00" shape-rendering="crispEdges"/>
<rect x="82" y="202" width="1" height="1" fill="#fff" shape-rendering="crispEdges"/>
<rect x="97" y="164" width="3" height="15" fill="#00ff00" shape-rendering="crispEdges"/>
<rect x="98" y="165" width="1" height="13" fill="#fff" shape-rendering="crispEdges"/>
<rect x="101" y="179" width="3" height="14" fill="#00ff00" shape-rendering="crispEdges"/>
<rect x="102" y="180" width="1" height="12" fill="#fff" shape-rendering="crispEdges"/>
<rect x="117" y="174" width="3" height="2" fill="#00ff00" shape-rendering="crispEdges"/>
<rect x="118" y="174" width="1" height="2" fill="#fff" shape-rendering="crispEdges"/>
<rect x="125" y="169" width="3" height="6" fill="#00ff00" shape-rendering="crispEdges"/>
<rect x="126" y="170" width="1" height="4" fill="#fff" shape-rendering="crispEdges"/>
<rect x="137" y="164" width="3" height="35" fill="#00ff00" shape-rendering="crispEdges"/>
<rect x="138" y="165" width="1" height="33" fill="#fff" shape-rendering="crispEdges"/>
<rect x="141" y="198" width="3" height="22" fill="#00ff00" shape-rendering="crispEdges"/>
<rect x="142" y="199" width="1" height="20" fill="#fff" shape-rendering="crispEdges"/>
<rect x="145" y="219" width="3" height="15" fill="#00ff00" shape-rendering="crispEdges"/>
<rect x="146" y="220" width="1" height="13" fill="#fff" shape-rendering="crispEdges"/>
<rect x="149" y="231" width="3" height="4" fill="#00ff00" shape-rendering="crispEdges"/>
<rect x="150" y="232" width="1" height="2" fill="#fff" shape-rendering="crispEdges"/>
<rect x="165" y="198" width="3" height="9" fill="#00ff00" shape-rendering="crispEdges"/>
<rect x="166" y="199" width="1" height="7" fill="#fff" shape-rendering="crispEdges"/>
<rect x="169" y="206" width="3" height="23" fill="#00ff00" shape-rendering="crispEdges"/>
<rect x="170" y="207" width="1" height="21" fill="#fff" shape-rendering="crispEdges"/>
<rect x="173" y="229" width="3" height="11" fill="#00ff00" shape-rendering="crispEdges"/>
<rect x="174" y="230" width="1" height="9" fill="#fff" shape-rendering="crispEdges"/>
<rect x="177" y="238" width="3" height="3" fill="#00ff00" shape-rendering="crispEdges"/>
<rect x="178" y="239" width="1" height="1" fill="#fff" shape-rendering="crispEdges"/>
<rect x="185" y="227" width="3" height="28" fill="#00ff00" shape-rendering="crispEdges"/>
<rect x="186" y="228" width="1" height="26" fill="#fff" shape-rendering="crispEdges"/>
<rect x="193" y="246" width="3" height="32" fill="#00ff00" shape-rendering="crispEdges"/>
<rect x="194" y="247" width="1" height="30" fill="#fff" shape-rendering="crispEdges"/>
<rect x="197" y="276" width="3" height="2" fill="#00ff00" shape-rendering="crispEdges"/>
<rect x="198" y="276" width="1" height="2" fill="#fff" shape-rendering="crispEdges"/>
<rect x="209" y="268" width="3" height="14" fill="#00ff00" shape-rendering="crispEdges"/>
<rect x="210" y="269" width="1" height="12" fill="#fff" shape-rendering="crispEdges"/>
<rect x="213" y="275" width="3" height="7" fill="#00ff00" shape-rendering="crispEdges"/>
<rect x="214" y="276" width="1" height="5" fill="#fff" shape-rendering="crispEdges"/>
<rect x="233" y="188" width="3" height="13" fill="#00ff00" shape-rendering="crispEdges"/>
<rect x="234" y="189" width="1" height="11" fill="#fff" shape-rendering="crispEdges"/>
<rect x="237" y="200" width="3" height="2" fill="#00ff00" shape-rendering="crispEdges"/>
<rect x="238" y="200" width="1" height="2" fill="#fff" shape-rendering="crispEdges"/>
<rect x="257" y="183" width="3" height="14" fill="#00ff00" shape-rendering="crispEdges"/>
<rect x="258" y="184" width="1" height="12" fill="#fff" shape-rendering="crispEdges"/>
<rect x="261" y="201" width="3" height="12" fill="#00ff00" shape-rendering="crispEdges"/>
<rect x="262" y="202" width="1" height="10" fill="#fff" shape-rendering="crispEdges"/>
<rect x="265" y="214" width="3" height="36" fill="#00ff00" shape-rendering="crispEdges"/>
<rect x="266" y="215" width="1" height="34" fill="#fff" shape-rendering="crispEdges"/>
<rect x="269" y="250" width="3" height="2" fill="#00ff00" shape-rendering="crispEdges"/>
<rect x="270" y="250" width="1" height="2" fill="#fff" shape-rendering="crispEdges"/>
<rect x="285" y="206" width="3" height="36" fill="#00ff00" shape-rendering="crispEdges"/>
<rect x="286" y="207" width="1" height="34" fill="#fff" shape-rendering="crispEdges"/>
<rect x="309" y="166" width="3" height="20" fill="#00ff00" shape-rendering="crispEdges"/>
<rect x="310" y="167" width="1" height="18" fill="#fff" shape-rendering="crispEdges"/>
<rect x="313" y="186" width="3" height="38" fill="#00ff00" shape-rendering="crispEdges"/>
<rect x="314" y="187" width="1" height="36" fill="#fff" shape-rendering="crispEdges"/>
<rect x="321" y="227" width="3" height="6" fill="#00ff00" shape-rendering="crispEdges"/>
<rect x="322" y="228" width="1" height="4" fill="#fff" shape-rendering="crispEdges"/>
<rect x="325" y="232" width="3" height="15" fill="#00ff00" shape-rendering="crispEdges"/>
<rect x="326" y="233" width="1" height="13" fill="#fff" shape-rendering="crispEdges"/>
<rect x="337" y="215" width="3" height="5" fill="#00ff00" shape-rendering="crispEdges"/>
<rect x="338" y="216" width="1" height="3" fill="#fff" shape-rendering="crispEdges"/>
<rect x="341" y="219" width="3" height="8" fill="#00ff00" shape-rendering="crispEdges"/>
<rect x="342" y="220" width="1" height="6" fill="#fff" shape-rendering="crispEdges"/>
<rect x="345" y="223" width="3" height="2" fill="#00ff00" shape-rendering="crispEdges"/>
<rect x="346" y="223" width="1" height="2" fill="#fff" shape-rendering="crispEdges"/>
<rect x="353" y="223" width="3" height="6" fill="#00ff00" shape-rendering="crispEdges"/>
<rect x="354" y="224" width="1" height="4" fill="#fff" shape-rendering="crispEdges"/>
<rect x="365" y="188" width="3" height="14" fill="#00ff00" shape-rendering="crispEdges"/>
<rect x="366" y="189" width="1" height="12" fill="#fff" shape-rendering="crispEdges"/>
<rect x="369" y="197" width="3" height="4" fill="#00ff00" shape-rendering="crispEdges"/>
<rect x="370" y="198" width="1" height="2" fill="#fff" shape-rendering="crispEdges"/>
<rect x="373" y="197" width="3" height="10" fill="#00ff00" shape-rendering="crispEdges"/>
<rect x="374" y="198" width="1" height="8" fill="#fff" shape-rendering="crispEdges"/>
<rect x="397" y="143" width="3" height="2" fill="#00ff00" shape-rendering="crispEdges"/>
<rect x="398" y="143" width="1" height="2" fill="#fff" shape-rendering="crispEdges"/>
<rect x="401" y="144" width="3" height="21" fill="#00ff00" shape-rendering="crispEdges"/>
<rect x="402" y="145" width="1" height="19" fill="#fff" shape-rendering="crispEdges"/>
<rect x="405" y="165" width="3" height="2" fill="#00ff00" shape-rendering="crispEdges"/>
<rect x="406" y="165" width="1" height="2" fill="#fff" shape-rendering="crispEdges"/>
<rect x="409" y="166" width="3" height="46" fill="#00ff00" shape-rendering="crispEdges"/>
<rect x="410" y="167" width="1" height="44" fill="#fff" shape-rendering="crispEdges"/>
<rect x="413" y="209" width="3" height="4" fill="#00ff00" shape-rendering="crispEdges"/>
<rect x="414" y="210" width="1" height="2" fill="#fff" shape-rendering="crispEdges"/>
<rect x="429" y="192" width="3" height="12" fill="#00ff00" shape-rendering="crispEdges"/>
<rect x="430" y="193" width="1" height="10" fill="#fff" shape-rendering="crispEdges"/>
<rect x="433" y="203" width="3" height="45" fill="#00ff00" shape-rendering="crispEdges"/>
<rect x="434" y="204" width="1" height="43" fill="#fff" shape-rendering="crispEdges"/>
<rect x="437" y="246" width="3" height="5" fill="#00ff00" shape-rendering="crispEdges"/>
<rect x="438" y="247" width="1" height="3" fill="#fff" shape-rendering="crispEdges"/>
<rect x="461" y="198" width="3" height="6" fill="#00ff00" shape-rendering="crispEdges"/>
<rect x="462" y="199" width="1" height="4" fill="#fff" shape-rendering="crispEdges"/>
<rect x="465" y="203" width="3" height="3" fill="#00ff00" shape-rendering="crispEdges"/>
<rect x="466" y="204" width="1" height="1" fill="#fff" shape-rendering="crispEdges"/>
<rect x="477" y="197" width="3" height="27" fill="#00ff00" shape-rendering="crispEdges"/>
<rect x="478" y="198" width="1" height="25" fill="#fff" shape-rendering="crispEdges"/>
<rect x="485" y="210" width="3" height="4" fill="#00ff00" shape-rendering="crispEdges"/>
<rect x="486" y="211" width="1" height="2" fill="#fff" shape-rendering="crispEdges"/>
<rect x="497" y="210" width="3" height="60" fill="#00ff00" shape-rendering="crispEdges"/>
<rect x="498" y="211" width="1" height="58" fill="#fff" shape-rendering="crispEdges"/>
<rect x="501" y="270" width="3" height="18" fill="#00ff00" shape-rendering="crispEdges"/>
<rect x="502" y="271" width="1" height="16" fill="#fff" shape-rendering="crispEdges"/>
<rect x="529" y="219" width="3" height="2" fill="#00ff00" shape-rendering="crispEdges"/>
<rect x="530" y="219" width="1" height="2" fill="#fff" shape-rendering="crispEdges"/>
<rect x="533" y="219" width="3" height="4" fill="#00ff00" shape-rendering="crispEdges"/>
<rect x="534" y="220" width="1" height="2" fill="#fff" shape-rendering="crispEdges"/>
<rect x="541" y="213" width="3" height="11" fill="#00ff00" shape-rendering="crispEdges"/>
<rect x="542" y="214" width="1" height="9" fill="#fff" shape-rendering="crispEdges"/>
<rect x="553" y="194" width="3" height="16" fill="#00ff00" shape-rendering="crispEdges"/>
<rect x="554" y="195" width="1" height="14" fill="#fff" shape-rendering="crispEdges"/>
<rect x="581" y="153" width="3" height="29" fill="#00ff00" shape-rendering="crispEdges"/>
<rect x="582" y="154" width="1" height="27" fill="#fff" shape-rendering="crispEdges"/>
<rect x="585" y="188" width="3" height="4" fill="#00ff00" shape-rendering="crispEdges"/>
<rect x="586" y="189" width="1" height="2" fill="#fff" shape-rendering="crispEdges"/>
<rect x="597" y="107" width="3" height="28" fill="#00ff00" shape-rendering="crispEdges"/>
<rect x="598" y="108" width="1" height="26" fill="#fff" shape-rendering="crispEdges"/>
<rect x="605" y="124" width="3" height="12" fill="#00ff00" shape-rendering="crispEdges"/>
<rect x="606" y="125" width="1" height="10" fill="#fff" shape-rendering="crispEdges"/>
<rect x="613" y="130" width="3" height="6" fill="#00ff00" shape-rendering="crispEdges"/>
<rect x="614" y="131" width="1" height="4" fill="#fff" shape-rendering="crispEdges"/>
<rect x="617" y="135" width="3" height="17" fill="#00ff00" shape-rendering="crispEdges"/>
<rect x="618" y="136" width="1" height="15" fill="#fff" shape-rendering="crispEdges"/>
<rect x="621" y="152" width="3" height="14" fill="#00ff00" shape-rendering="crispEdges"/>
<rect x="622" y="153" width="1" height="12" fill="#fff" shape-rendering="crispEdges"/>
<rect x="625" y="166" width="3" height="23" fill="#00ff00" shape-rendering="crispEdges"/>
<rect x="626" y="167" width="1" height="21" fill="#fff" shape-rendering="crispEdges"/>
<rect x="629" y="188" width="3" height="18" fill="#00ff00" shape-rendering="crispEdges"/>
<rect x="630" y="189" width="1" height="16" fill="#fff" shape-rendering="crispEdges"/>
<rect x="3" y="255" width="1" height="18" fill="#00ff00"/>
<polyline points="3.0,273.6 14.0,273.6 19.0,270.0 23.0,259.0 26.0,249.0 38.0,247.0 43.0,242.0 48.0,236.0 51.0,225.0 55.0,213.0 60.0,210.0 64.0,205.6 74.0,204.0 78.0,201.6 98.0,201.0 102.0,194.0 106.0,186.0 109.0,181.0 112.0,178.0 122.0,177.0 125.0,164.0 128.0,162.6 139.0,162.6 141.0,169.0 144.0,172.5 150.0,176.0 167.0,176.0 169.0,184.0 170.6,191.0 174.0,194.0 182.0,194.4 185.0,200.0 187.0,202.5 190.6,203.0 192.5,209.0 194.4,214.4 206.0,215.0 210.0,219.4 218.0,219.8 222.0,225.0 239.0,225.6 243.0,234.0 302.0,234.0 306.0,227.0 318.0,226.0 320.0,219.0 321.6,210.0 370.0,209.6 386.0,205.6 390.0,204.0 395.0,197.0 432.0,197.0 435.0,198.6 495.0,198.6 499.0,206.0 506.0,220.0 514.0,233.0 524.0,234.0 532.0,236.4 544.0,236.4 549.0,232.4 566.0,232.4 574.0,227.0 578.0,223.0 579.0,217.0 590.0,216.6 594.0,199.0 605.0,195.0 610.0,184.0 620.0,179.0 624.0,176.0 627.0,170.0 633.0,167.0 638.0,166.0" stroke="#0000ff" stroke-width="1.05" fill="none" />
<polyline points="3.0,256.0 7.5,250.6 16.0,248.0 19.4,245.0 22.5,236.0 25.6,226.0 30.6,223.8 36.0,213.0 40.0,202.5 45.0,195.0 48.0,190.0 51.0,183.0 54.0,182.0 58.0,153.0 62.0,150.0 66.0,146.6 70.0,146.6 74.0,155.0 78.0,162.0 98.0,162.4 100.0,169.0 104.0,179.0 108.0,183.0 114.0,182.0 118.0,176.0 124.0,175.0 128.0,171.0 132.0,170.0 135.0,170.6 137.5,174.0 140.0,182.5 142.5,189.0 149.0,192.0 152.0,195.0 155.0,199.4 170.0,199.4 172.0,204.0 174.0,216.0 181.0,216.5 185.0,222.5 187.5,224.4 190.6,224.8 192.5,230.0 195.0,237.0 202.0,245.0 206.0,252.0 210.0,259.0 214.0,259.0 217.0,254.0 220.0,244.0 226.0,239.0 232.0,236.0 240.0,233.6 251.0,233.6 254.0,215.0 258.0,198.0 263.0,198.0 266.0,214.0 272.0,217.0 288.0,217.0 291.0,220.0 294.0,225.0 298.0,226.4 303.0,225.0 305.0,218.0 308.0,204.0 320.0,203.6 328.0,204.0 336.0,205.0 342.0,207.0 346.0,214.0 350.0,232.0 355.0,233.0 360.0,216.0 363.0,206.0 372.0,206.0 384.0,205.0 389.0,201.0 392.0,190.0 394.0,182.0 396.0,175.0 407.0,174.4 414.0,179.4 430.6,179.4 432.5,188.8 433.8,197.5 438.8,205.0 442.5,210.0 447.0,217.0 461.0,217.5 465.0,221.0 468.0,221.0 475.0,216.0 481.0,216.0 487.5,210.0 494.0,209.4 496.0,215.0 498.0,227.5 500.0,232.0 503.0,236.4 510.0,237.0 514.0,244.0 520.0,246.0 528.0,249.0 534.0,251.0 539.0,247.0 544.0,238.0 549.0,223.0 552.0,214.0 560.0,206.0 570.0,200.0 578.0,192.0 582.0,182.0 590.0,180.0 593.0,161.0 596.0,155.0 614.0,154.4 620.0,149.5 625.6,146.0 628.0,150.0 630.6,156.0 633.0,158.0 638.0,158.6" stroke="#ff0000" stroke-width="1.05" fill="none" />
<rect x="3" y="102" width="744" height="2" fill="#ff0000"/>
<rect x="3" y="158" width="744" height="2" fill="#ff0000"/>
<rect x="3" y="290" width="744" height="2" fill="#00ffff"/>
<rect x="3" y="337" width="744" height="2" fill="#00ffff"/>
<line x1="498.5" y1="246.5" x2="582.4" y2="187.4" stroke="#e8461e" stroke-width="1.1" stroke-dasharray="5 4"/>
<line x1="534.7" y1="209.4" x2="582.4" y2="187.4" stroke="#e8461e" stroke-width="1.1" stroke-dasharray="5 4"/>
<line x1="524" y1="252.5" x2="584" y2="191" stroke="#e8461e" stroke-width="2.2" stroke-dasharray="4 4"/>
<line x1="546.5" y1="202.5" x2="582.4" y2="190" stroke="#1e6ec8" stroke-width="2" stroke-dasharray="4 4"/>
<line x1="382" y1="195" x2="406" y2="161" stroke="#e8461e" stroke-width="1.6" stroke-dasharray="3 2.5"/>
<line x1="385" y1="187" x2="403" y2="151" stroke="#1e6ec8" stroke-width="1.6" stroke-dasharray="3 2.5"/>
<path d="M497.0 242.5h3v3.5h2l-3.5 4l-3.5 -4h2z" fill="#e8461e" stroke="#fff" stroke-width="2" stroke-linejoin="round" paint-order="stroke"/>
<path d="M521.1 244.6h3v3.5h2l-3.5 4l-3.5 -4h2z" fill="#e8461e" stroke="#fff" stroke-width="2" stroke-linejoin="round" paint-order="stroke"/>
<path d="M533.2 205.4h3v3.5h2l-3.5 4l-3.5 -4h2z" fill="#e8461e" stroke="#fff" stroke-width="2" stroke-linejoin="round" paint-order="stroke"/>
<path d="M545.0 206.5h3v-3.5h2l-3.5 -4l-3.5 4h2z" fill="#1e6ec8" stroke="#fff" stroke-width="2" stroke-linejoin="round" paint-order="stroke"/>
<path d="M580.9 183.4h3v3.5h2l-3.5 4l-3.5 -4h2z" fill="#e8461e" stroke="#fff" stroke-width="2" stroke-linejoin="round" paint-order="stroke"/>
<path d="M580.9 201.5h3v-3.5h2l-3.5 -4l-3.5 4h2z" fill="#1e6ec8" stroke="#fff" stroke-width="2" stroke-linejoin="round" paint-order="stroke"/>
<path d="M673.5 188.25H682V203.5H686.5L677.75 211.5L669 203.5H673.5Z" fill="#000" stroke="#00ffff" stroke-width="2" stroke-linejoin="miter"/>
<path d="M18.5 420V431 M22.5 419V431 M26.5 419V431 M46.5 428V431 M50.5 425V431 M66.5 425V431 M70.5 425V431 M74.5 420V431 M90.5 429V431 M94.5 421V431 M98.5 422V431 M118.5 426V431 M138.5 429V431 M142.5 425V431 M146.5 427V431 M162.5 425V431 M166.5 429V431 M170.5 428V431 M186.5 420V431 M190.5 426V431 M194.5 422V431 M210.5 429V431 M214.5 427V431 M218.5 414V431 M234.5 427V431 M238.5 427V431 M242.5 424V431 M258.5 429V431 M262.5 426V431 M266.5 421V431 M286.5 428V431 M290.5 426V431 M306.5 423V431 M310.5 426V431 M314.5 415V431 M338.5 427V431 M354.5 422V431 M358.5 420V431 M362.5 403V431 M382.5 420V431 M386.5 409V431 M402.5 426V431 M406.5 419V431 M410.5 409V431 M430.5 427V431 M434.5 416V431 M450.5 428V431 M454.5 422V431 M458.5 418V431 M478.5 425V431 M482.5 418V431 M498.5 425V431 M502.5 428V431 M506.5 428V431 M526.5 429V431 M530.5 426V431 M546.5 428V431 M550.5 426V431 M554.5 425V431 M570.5 429V431 M574.5 428V431 M578.5 422V431 M582.5 413V431 M594.5 418V431 M598.5 421V431 M602.5 413V431 M606.5 427V431 M618.5 427V431 M622.5 423V431 M626.5 411V431" stroke="#32cd32" stroke-width="1" fill="none" shape-rendering="crispEdges"/>
<rect x="3" y="431" width="14" height="13" fill="#f8f8f8"/>
<rect x="3" y="444" width="1" height="3" fill="#fff"/>
<clipPath id="c0"><rect x="3" y="431" width="14" height="13"/></clipPath>
<text x="5" y="441.3" font-size="9.6" fill="#000" stroke="#000" stroke-width="0.45" clip-path="url(#c0)" textLength="12.9" lengthAdjust="spacingAndGlyphs">19:</text>
<rect x="19" y="431" width="14" height="13" fill="#afeeee"/>
<rect x="19" y="444" width="1" height="3" fill="#fff"/>
<clipPath id="c1"><rect x="19" y="431" width="14" height="13"/></clipPath>
<text x="21" y="441.3" font-size="9.6" fill="#000" stroke="#000" stroke-width="0.45" clip-path="url(#c1)" textLength="12.9" lengthAdjust="spacingAndGlyphs">11:</text>
<rect x="34" y="431" width="23" height="13" fill="#ffb6c1"/>
<rect x="34" y="444" width="1" height="3" fill="#fff"/>
<clipPath id="c2"><rect x="34" y="431" width="23" height="13"/></clipPath>
<text x="36" y="441.3" font-size="9.6" fill="#000" stroke="#000" stroke-width="0.45" clip-path="url(#c2)" textLength="21.5" lengthAdjust="spacingAndGlyphs">02:01</text>
<rect x="58" y="431" width="7" height="13" fill="#f8f8f8"/>
<rect x="58" y="444" width="1" height="3" fill="#fff"/>
<clipPath id="c3"><rect x="58" y="431" width="7" height="13"/></clipPath>
<text x="60" y="441.3" font-size="9.6" fill="#000" stroke="#000" stroke-width="0.45" clip-path="url(#c3)" textLength="4.3" lengthAdjust="spacingAndGlyphs">0</text>
<rect x="67" y="431" width="2" height="13" fill="#afeeee"/>
<rect x="67" y="444" width="1" height="3" fill="#fff"/>
<rect x="70" y="431" width="27" height="13" fill="#afeeee"/>
<rect x="70" y="444" width="1" height="3" fill="#fff"/>
<clipPath id="c5"><rect x="70" y="431" width="27" height="13"/></clipPath>
<text x="72" y="441.3" font-size="9.6" fill="#000" stroke="#000" stroke-width="0.45" clip-path="url(#c5)" textLength="21.5" lengthAdjust="spacingAndGlyphs">13:02</text>
<rect x="99" y="431" width="2" height="13" fill="#ffb6c1"/>
<rect x="99" y="444" width="1" height="3" fill="#fff"/>
<rect x="102" y="431" width="11" height="13" fill="#afeeee"/>
<rect x="102" y="444" width="1" height="3" fill="#fff"/>
<clipPath id="c7"><rect x="102" y="431" width="11" height="13"/></clipPath>
<text x="104" y="441.3" font-size="9.6" fill="#000" stroke="#000" stroke-width="0.45" clip-path="url(#c7)" textLength="8.6" lengthAdjust="spacingAndGlyphs">20</text>
<rect x="115" y="431" width="6" height="13" fill="#afeeee"/>
<rect x="115" y="444" width="1" height="3" fill="#fff"/>
<clipPath id="c8"><rect x="115" y="431" width="6" height="13"/></clipPath>
<text x="117" y="441.3" font-size="9.6" fill="#000" stroke="#000" stroke-width="0.45" clip-path="url(#c8)" textLength="4.3" lengthAdjust="spacingAndGlyphs">1</text>
<rect x="122" y="431" width="30" height="13" fill="#f8f8f8"/>
<rect x="122" y="444" width="1" height="3" fill="#fff"/>
<clipPath id="c9"><rect x="122" y="431" width="30" height="13"/></clipPath>
<text x="124" y="441.3" font-size="9.6" fill="#000" stroke="#000" stroke-width="0.45" clip-path="url(#c9)" textLength="21.5" lengthAdjust="spacingAndGlyphs">17:00</text>
<rect x="154" y="431" width="2" height="13" fill="#afeeee"/>
<rect x="154" y="444" width="1" height="3" fill="#fff"/>
<rect x="158" y="431" width="19" height="13" fill="#afeeee"/>
<rect x="158" y="444" width="1" height="3" fill="#fff"/>
<clipPath id="c11"><rect x="158" y="431" width="19" height="13"/></clipPath>
<text x="160" y="441.3" font-size="9.6" fill="#000" stroke="#000" stroke-width="0.45" clip-path="url(#c11)" textLength="17.2" lengthAdjust="spacingAndGlyphs">07:0</text>
<rect x="179" y="431" width="25" height="13" fill="#afeeee"/>
<rect x="179" y="444" width="1" height="3" fill="#fff"/>
<clipPath id="c12"><rect x="179" y="431" width="25" height="13"/></clipPath>
<text x="181" y="441.3" font-size="9.6" fill="#000" stroke="#000" stroke-width="0.45" clip-path="url(#c12)" textLength="21.5" lengthAdjust="spacingAndGlyphs">01:50</text>
<rect x="205" y="431" width="7" height="13" fill="#f8f8f8"/>
<rect x="205" y="444" width="1" height="3" fill="#fff"/>
<clipPath id="c13"><rect x="205" y="431" width="7" height="13"/></clipPath>
<text x="207" y="441.3" font-size="9.6" fill="#000" stroke="#000" stroke-width="0.45" clip-path="url(#c13)" textLength="8.6" lengthAdjust="spacingAndGlyphs">)2</text>
<rect x="214" y="431" width="11" height="13" fill="#afeeee"/>
<rect x="214" y="444" width="1" height="3" fill="#fff"/>
<clipPath id="c14"><rect x="214" y="431" width="11" height="13"/></clipPath>
<text x="216" y="441.3" font-size="9.6" fill="#000" stroke="#000" stroke-width="0.45" clip-path="url(#c14)" textLength="8.6" lengthAdjust="spacingAndGlyphs">12</text>
<rect x="226" y="431" width="26" height="13" fill="#ffb6c1"/>
<rect x="226" y="444" width="1" height="3" fill="#fff"/>
<clipPath id="c15"><rect x="226" y="431" width="26" height="13"/></clipPath>
<text x="228" y="441.3" font-size="9.6" fill="#000" stroke="#000" stroke-width="0.45" clip-path="url(#c15)" textLength="21.5" lengthAdjust="spacingAndGlyphs">02:01</text>
<rect x="253" y="431" width="19" height="13" fill="#f8f8f8"/>
<rect x="253" y="444" width="1" height="3" fill="#fff"/>
<clipPath id="c16"><rect x="253" y="431" width="19" height="13"/></clipPath>
<text x="255" y="441.3" font-size="9.6" fill="#000" stroke="#000" stroke-width="0.45" clip-path="url(#c16)" textLength="17.2" lengthAdjust="spacingAndGlyphs">07:0</text>
<rect x="275" y="431" width="3" height="13" fill="#f8f8f8"/>
<rect x="275" y="444" width="1" height="3" fill="#fff"/>
<rect x="279" y="431" width="3" height="13" fill="#f8f8f8"/>
<rect x="279" y="444" width="1" height="3" fill="#fff"/>
<rect x="283" y="431" width="22" height="13" fill="#afeeee"/>
<rect x="283" y="444" width="1" height="3" fill="#fff"/>
<clipPath id="c19"><rect x="283" y="431" width="22" height="13"/></clipPath>
<text x="285" y="441.3" font-size="9.6" fill="#000" stroke="#000" stroke-width="0.45" clip-path="url(#c19)" textLength="21.5" lengthAdjust="spacingAndGlyphs">11:23</text>
<rect x="307" y="431" width="2" height="13" fill="#ffb6c1"/>
<rect x="307" y="444" width="1" height="3" fill="#fff"/>
<rect x="311" y="431" width="2" height="13" fill="#afeeee"/>
<rect x="311" y="444" width="1" height="3" fill="#fff"/>
<rect x="315" y="431" width="18" height="13" fill="#ffb6c1"/>
<rect x="315" y="444" width="1" height="3" fill="#fff"/>
<clipPath id="c22"><rect x="315" y="431" width="18" height="13"/></clipPath>
<text x="317" y="441.3" font-size="9.6" fill="#000" stroke="#000" stroke-width="0.45" clip-path="url(#c22)" textLength="17.2" lengthAdjust="spacingAndGlyphs">17:1</text>
<rect x="335" y="431" width="10" height="13" fill="#afeeee"/>
<rect x="335" y="444" width="1" height="3" fill="#fff"/>
<clipPath id="c23"><rect x="335" y="431" width="10" height="13"/></clipPath>
<text x="337" y="441.3" font-size="9.6" fill="#000" stroke="#000" stroke-width="0.45" clip-path="url(#c23)" textLength="8.6" lengthAdjust="spacingAndGlyphs">12</text>
<rect x="346" y="431" width="26" height="13" fill="#afeeee"/>
<rect x="346" y="444" width="1" height="3" fill="#fff"/>
<clipPath id="c24"><rect x="346" y="431" width="26" height="13"/></clipPath>
<text x="348" y="441.3" font-size="9.6" fill="#000" stroke="#000" stroke-width="0.45" clip-path="url(#c24)" textLength="21.5" lengthAdjust="spacingAndGlyphs">02:01</text>
<rect x="372" y="431" width="5" height="13" fill="#ffb6c1"/>
<rect x="372" y="444" width="1" height="3" fill="#fff"/>
<clipPath id="c25"><rect x="372" y="431" width="5" height="13"/></clipPath>
<text x="374" y="441.3" font-size="9.6" fill="#000" stroke="#000" stroke-width="0.45" clip-path="url(#c25)" textLength="4.3" lengthAdjust="spacingAndGlyphs">)</text>
<rect x="379" y="431" width="14" height="13" fill="#ffb6c1"/>
<rect x="379" y="444" width="1" height="3" fill="#fff"/>
<clipPath id="c26"><rect x="379" y="431" width="14" height="13"/></clipPath>
<text x="381" y="441.3" font-size="9.6" fill="#000" stroke="#000" stroke-width="0.45" clip-path="url(#c26)" textLength="12.9" lengthAdjust="spacingAndGlyphs">10:</text>
<rect x="395" y="431" width="2" height="13" fill="#f8f8f8"/>
<rect x="395" y="444" width="1" height="3" fill="#fff"/>
<rect x="398" y="431" width="2" height="13" fill="#afeeee"/>
<rect x="398" y="444" width="1" height="3" fill="#fff"/>
<rect x="402" y="431" width="3" height="13" fill="#ffb6c1"/>
<rect x="402" y="444" width="1" height="3" fill="#fff"/>
<rect x="407" y="431" width="10" height="13" fill="#afeeee"/>
<rect x="407" y="444" width="1" height="3" fill="#fff"/>
<clipPath id="c30"><rect x="407" y="431" width="10" height="13"/></clipPath>
<text x="409" y="441.3" font-size="9.6" fill="#000" stroke="#000" stroke-width="0.45" clip-path="url(#c30)" textLength="8.6" lengthAdjust="spacingAndGlyphs">15</text>
<rect x="418" y="431" width="11" height="13" fill="#f8f8f8"/>
<rect x="418" y="444" width="1" height="3" fill="#fff"/>
<clipPath id="c31"><rect x="418" y="431" width="11" height="13"/></clipPath>
<text x="420" y="441.3" font-size="9.6" fill="#000" stroke="#000" stroke-width="0.45" clip-path="url(#c31)" textLength="8.6" lengthAdjust="spacingAndGlyphs">02</text>
<rect x="431" y="431" width="6" height="13" fill="#afeeee"/>
<rect x="431" y="444" width="1" height="3" fill="#fff"/>
<clipPath id="c32"><rect x="431" y="431" width="6" height="13"/></clipPath>
<text x="433" y="441.3" font-size="9.6" fill="#000" stroke="#000" stroke-width="0.45" clip-path="url(#c32)" textLength="4.3" lengthAdjust="spacingAndGlyphs">1</text>
<rect x="439" y="431" width="18" height="13" fill="#afeeee"/>
<rect x="439" y="444" width="1" height="3" fill="#fff"/>
<clipPath id="c33"><rect x="439" y="431" width="18" height="13"/></clipPath>
<text x="441" y="441.3" font-size="9.6" fill="#000" stroke="#000" stroke-width="0.45" clip-path="url(#c33)" textLength="17.2" lengthAdjust="spacingAndGlyphs">20:5</text>
<rect x="462" y="431" width="15" height="13" fill="#afeeee"/>
<rect x="462" y="444" width="1" height="3" fill="#fff"/>
<clipPath id="c34"><rect x="462" y="431" width="15" height="13"/></clipPath>
<text x="464" y="441.3" font-size="9.6" fill="#000" stroke="#000" stroke-width="0.45" clip-path="url(#c34)" textLength="12.9" lengthAdjust="spacingAndGlyphs">20:</text>
<rect x="478" y="431" width="28" height="13" fill="#afeeee"/>
<rect x="478" y="444" width="1" height="3" fill="#fff"/>
<clipPath id="c35"><rect x="478" y="431" width="28" height="13"/></clipPath>
<text x="480" y="441.3" font-size="9.6" fill="#000" stroke="#000" stroke-width="0.45" clip-path="url(#c35)" textLength="21.5" lengthAdjust="spacingAndGlyphs">13:00</text>
<rect x="506" y="431" width="6" height="13" fill="#afeeee"/>
<rect x="506" y="444" width="1" height="3" fill="#fff"/>
<clipPath id="c36"><rect x="506" y="431" width="6" height="13"/></clipPath>
<text x="508" y="441.3" font-size="9.6" fill="#000" stroke="#000" stroke-width="0.45" clip-path="url(#c36)" textLength="8.6" lengthAdjust="spacingAndGlyphs">1:</text>
<rect x="514" y="431" width="11" height="13" fill="#ffb6c1"/>
<rect x="514" y="444" width="1" height="3" fill="#fff"/>
<clipPath id="c37"><rect x="514" y="431" width="11" height="13"/></clipPath>
<text x="516" y="441.3" font-size="9.6" fill="#000" stroke="#000" stroke-width="0.45" clip-path="url(#c37)" textLength="8.6" lengthAdjust="spacingAndGlyphs">02</text>
<rect x="526" y="431" width="29" height="13" fill="#f8f8f8"/>
<rect x="526" y="444" width="1" height="3" fill="#fff"/>
<clipPath id="c38"><rect x="526" y="431" width="29" height="13"/></clipPath>
<text x="528" y="441.3" font-size="9.6" fill="#000" stroke="#000" stroke-width="0.45" clip-path="url(#c38)" textLength="21.5" lengthAdjust="spacingAndGlyphs">13:00</text>
<rect x="555" y="431" width="2" height="13" fill="#afeeee"/>
<rect x="555" y="444" width="1" height="3" fill="#fff"/>
<rect x="559" y="431" width="2" height="13" fill="#afeeee"/>
<rect x="559" y="444" width="1" height="3" fill="#fff"/>
<rect x="562" y="431" width="7" height="13" fill="#f8f8f8"/>
<rect x="562" y="444" width="1" height="3" fill="#fff"/>
<clipPath id="c41"><rect x="562" y="431" width="7" height="13"/></clipPath>
<text x="564" y="441.3" font-size="9.6" fill="#000" stroke="#000" stroke-width="0.45" clip-path="url(#c41)" textLength="4.3" lengthAdjust="spacingAndGlyphs">0</text>
<rect x="570" y="431" width="1" height="13" fill="#f8f8f8"/>
<rect x="570" y="444" width="1" height="3" fill="#fff"/>
<rect x="572" y="431" width="1" height="13" fill="#afeeee"/>
<rect x="572" y="444" width="1" height="3" fill="#fff"/>
<rect x="574" y="431" width="15" height="13" fill="#f8f8f8"/>
<rect x="574" y="444" width="1" height="3" fill="#fff"/>
<clipPath id="c44"><rect x="574" y="431" width="15" height="13"/></clipPath>
<text x="576" y="441.3" font-size="9.6" fill="#000" stroke="#000" stroke-width="0.45" clip-path="url(#c44)" textLength="12.9" lengthAdjust="spacingAndGlyphs">13:</text>
<rect x="590" y="431" width="26" height="13" fill="#afeeee"/>
<rect x="590" y="444" width="1" height="3" fill="#fff"/>
<clipPath id="c45"><rect x="590" y="431" width="26" height="13"/></clipPath>
<text x="592" y="441.3" font-size="9.6" fill="#000" stroke="#000" stroke-width="0.45" clip-path="url(#c45)" textLength="21.5" lengthAdjust="spacingAndGlyphs">07:30</text>
<rect x="616" y="431" width="12" height="13" fill="#afeeee"/>
<rect x="616" y="444" width="1" height="3" fill="#fff"/>
<clipPath id="c46"><rect x="616" y="431" width="12" height="13"/></clipPath>
<text x="618" y="441.3" font-size="9.6" fill="#000" stroke="#000" stroke-width="0.45" clip-path="url(#c46)" textLength="8.6" lengthAdjust="spacingAndGlyphs">30</text>
<rect x="628" y="431" width="22" height="13" fill="#afeeee"/>
<rect x="628" y="444" width="1" height="3" fill="#fff"/>
<clipPath id="c47"><rect x="628" y="431" width="22" height="13"/></clipPath>
<text x="630" y="441.3" font-size="9.6" fill="#000" stroke="#000" stroke-width="0.45" clip-path="url(#c47)" textLength="17.2" lengthAdjust="spacingAndGlyphs">3:30</text>
<rect x="650" y="431" width="3" height="13" fill="#f8f8f8"/>
<rect x="650" y="444" width="1" height="3" fill="#fff"/>
<rect x="654" y="431" width="18" height="13" fill="#f8f8f8"/>
<rect x="654" y="444" width="1" height="3" fill="#fff"/>
<clipPath id="c49"><rect x="654" y="431" width="18" height="13"/></clipPath>
<text x="656" y="441.3" font-size="9.6" fill="#000" stroke="#000" stroke-width="0.45" clip-path="url(#c49)" textLength="17.2" lengthAdjust="spacingAndGlyphs">20:0</text>
<rect x="674" y="431" width="6" height="13" fill="#f8f8f8"/>
<rect x="674" y="444" width="1" height="3" fill="#fff"/>
<clipPath id="c50"><rect x="674" y="431" width="6" height="13"/></clipPath>
<text x="676" y="441.3" font-size="9.6" fill="#000" stroke="#000" stroke-width="0.45" clip-path="url(#c50)" textLength="4.3" lengthAdjust="spacingAndGlyphs">1</text>
<rect x="682" y="431" width="12" height="13" fill="#f8f8f8"/>
<rect x="682" y="444" width="1" height="3" fill="#fff"/>
<clipPath id="c51"><rect x="682" y="431" width="12" height="13"/></clipPath>
<text x="684" y="441.3" font-size="9.6" fill="#000" stroke="#000" stroke-width="0.45" clip-path="url(#c51)" textLength="12.9" lengthAdjust="spacingAndGlyphs">23:</text>
<rect x="699" y="431" width="1" height="13" fill="#f8f8f8"/>
<rect x="699" y="444" width="1" height="3" fill="#fff"/>
<rect x="702" y="431" width="1" height="13" fill="#f8f8f8"/>
<rect x="702" y="444" width="1" height="3" fill="#fff"/>
<rect x="705" y="431" width="14" height="13" fill="#f8f8f8"/>
<rect x="705" y="444" width="1" height="3" fill="#fff"/>
<clipPath id="c54"><rect x="705" y="431" width="14" height="13"/></clipPath>
<text x="707" y="441.3" font-size="9.6" fill="#000" stroke="#000" stroke-width="0.45" clip-path="url(#c54)" textLength="12.9" lengthAdjust="spacingAndGlyphs">23:</text>
<rect x="723" y="431" width="1" height="13" fill="#f8f8f8"/>
<rect x="723" y="444" width="1" height="3" fill="#fff"/>
<rect x="726" y="431" width="13" height="13" fill="#f8f8f8"/>
<rect x="726" y="444" width="1" height="3" fill="#fff"/>
<clipPath id="c56"><rect x="726" y="431" width="13" height="13"/></clipPath>
<text x="728" y="441.3" font-size="9.6" fill="#000" stroke="#000" stroke-width="0.45" clip-path="url(#c56)" textLength="8.6" lengthAdjust="spacingAndGlyphs">20</text>
<rect x="742" y="431" width="2" height="13" fill="#f8f8f8"/>
<rect x="742" y="444" width="1" height="3" fill="#fff"/>
<path d="M6.5 445V447 M10.5 445V447 M14.5 445V447 M18.5 445V447 M22.5 445V447 M26.5 445V447 M30.5 445V447 M34.5 445V447 M38.5 445V447 M42.5 445V447 M46.5 445V447 M50.5 445V447 M54.5 445V447 M58.5 445V447 M62.5 445V447 M66.5 445V447 M70.5 445V447 M74.5 445V447 M78.5 445V447 M82.5 445V447 M86.5 445V447 M90.5 445V447 M94.5 445V447 M98.5 445V447 M102.5 445V447 M106.5 445V447 M110.5 445V447 M114.5 445V447 M118.5 445V447 M122.5 445V447 M126.5 445V447 M130.5 445V447 M134.5 445V447 M138.5 445V447 M142.5 445V447 M146.5 445V447 M150.5 445V447 M154.5 445V447 M158.5 445V447 M162.5 445V447 M166.5 445V447 M170.5 445V447 M174.5 445V447 M178.5 445V447 M182.5 445V447 M186.5 445V447 M190.5 445V447 M194.5 445V447 M198.5 445V447 M202.5 445V447 M206.5 445V447 M210.5 445V447 M214.5 445V447 M218.5 445V447 M222.5 445V447 M226.5 445V447 M230.5 445V447 M234.5 445V447 M238.5 445V447 M242.5 445V447 M246.5 445V447 M250.5 445V447 M254.5 445V447 M258.5 445V447 M262.5 445V447 M266.5 445V447 M270.5 445V447 M274.5 445V447 M278.5 445V447 M282.5 445V447 M286.5 445V447 M290.5 445V447 M294.5 445V447 M298.5 445V447 M302.5 445V447 M306.5 445V447 M310.5 445V447 M314.5 445V447 M318.5 445V447 M322.5 445V447 M326.5 445V447 M330.5 445V447 M334.5 445V447 M338.5 445V447 M342.5 445V447 M346.5 445V447 M350.5 445V447 M354.5 445V447 M358.5 445V447 M362.5 445V447 M366.5 445V447 M370.5 445V447 M374.5 445V447 M378.5 445V447 M382.5 445V447 M386.5 445V447 M390.5 445V447 M394.5 445V447 M398.5 445V447 M402.5 445V447 M406.5 445V447 M410.5 445V447 M414.5 445V447 M418.5 445V447 M422.5 445V447 M426.5 445V447 M430.5 445V447 M434.5 445V447 M438.5 445V447 M442.5 445V447 M446.5 445V447 M450.5 445V447 M454.5 445V447 M458.5 445V447 M462.5 445V447 M466.5 445V447 M470.5 445V447 M474.5 445V447 M478.5 445V447 M482.5 445V447 M486.5 445V447 M490.5 445V447 M494.5 445V447 M498.5 445V447 M502.5 445V447 M506.5 445V447 M510.5 445V447 M514.5 445V447 M518.5 445V447 M522.5 445V447 M526.5 445V447 M530.5 445V447 M534.5 445V447 M538.5 445V447 M542.5 445V447 M546.5 445V447 M550.5 445V447 M554.5 445V447 M558.5 445V447 M562.5 445V447 M566.5 445V447 M570.5 445V447 M574.5 445V447 M578.5 445V447 M582.5 445V447 M586.5 445V447 M590.5 445V447 M594.5 445V447 M598.5 445V447 M602.5 445V447 M606.5 445V447 M610.5 445V447 M614.5 445V447 M618.5 445V447 M622.5 445V447 M626.5 445V447 M630.5 445V447 M634.5 445V447 M638.5 445V447" stroke="#fff" stroke-width="1" fill="none" shape-rendering="crispEdges"/>
<path d="M38.5 445V447 M54.5 445V447 M62.5 445V447 M130.5 445V447 M134.5 445V447 M206.5 445V447 M230.5 445V447 M302.5 445V447 M326.5 445V447 M366.5 445V447 M374.5 445V447 M422.5 445V447 M446.5 445V447 M450.5 445V447 M466.5 445V447 M518.5 445V447 M538.5 445V447 M542.5 445V447 M554.5 445V447 M566.5 445V447 M586.5 445V447 M606.5 445V447 M634.5 445V447 M638.5 445V447" stroke="#32cd32" stroke-width="1" fill="none" shape-rendering="crispEdges"/>
<path d="M6.5 524.5V534.0 M10.5 524.5V528.0 M14.5 524.5V522.0 M18.5 524.5V518.0 M22.5 524.5V509.0 M26.5 524.5V498.0 M30.5 524.5V489.0 M34.5 524.5V482.0 M38.5 524.5V482.0 M42.5 524.5V476.0 M46.5 524.5V472.0 M50.5 524.5V466.0 M54.5 524.5V464.0 M58.5 524.5V464.0 M62.5 524.5V464.0 M66.5 524.5V464.0 M70.5 524.5V470.0 M74.5 524.5V479.0 M78.5 524.5V488.0 M82.5 524.5V496.0 M86.5 524.5V501.0 M90.5 524.5V504.0 M94.5 524.5V503.0 M98.5 524.5V505.0 M102.5 524.5V509.0 M106.5 524.5V510.0 M110.5 524.5V510.4 M114.5 524.5V510.0 M118.5 524.5V509.6 M122.5 524.5V510.0 M126.5 524.5V511.0 M130.5 524.5V510.4 M134.5 524.5V510.0 M138.5 524.5V516.0 M142.5 524.5V522.0 M146.5 524.5V531.0 M150.5 524.5V538.0 M154.5 524.5V543.0 M158.5 524.5V544.0 M162.5 524.5V544.0 M166.5 524.5V541.0 M170.5 524.5V543.0 M174.5 524.5V547.0 M178.5 524.5V549.0 M182.5 524.5V549.0 M186.5 524.5V553.0 M190.5 524.5V554.0 M194.5 524.5V562.0 M198.5 524.5V564.0 M202.5 524.5V566.0 M206.5 524.5V567.0 M210.5 524.5V568.0 M214.5 524.5V569.0 M218.5 524.5V560.0 M222.5 524.5V550.0 M226.5 524.5V541.0 M230.5 524.5V532.0 M234.5 524.5V527.0 M238.5 524.5V521.0 M242.5 524.5V518.0 M246.5 524.5V512.0 M250.5 524.5V509.0 M254.5 524.5V506.0 M258.5 524.5V506.0 M262.5 524.5V509.0 M266.5 524.5V518.0 M270.5 524.5V525.0 M274.5 524.5V526.0 M278.5 524.5V523.0 M282.5 524.5V522.4 M286.5 524.5V526.0 M290.5 524.5V526.0 M294.5 524.5V525.0 M298.5 524.5V523.0 M302.5 524.5V520.0 M306.5 524.5V512.0 M310.5 524.5V510.0 M314.5 524.5V514.0 M318.5 524.5V518.0 M322.5 524.5V525.0 M326.5 524.5V529.0 M330.5 524.5V531.0 M334.5 524.5V527.0 M338.5 524.5V529.0 M342.5 524.5V530.0 M346.5 524.5V529.0 M350.5 524.5V530.0 M354.5 524.5V529.0 M358.5 524.5V527.0 M362.5 524.5V522.4 M366.5 524.5V520.0 M370.5 524.5V517.0 M374.5 524.5V517.0 M378.5 524.5V517.0 M382.5 524.5V514.0 M386.5 524.5V510.0 M390.5 524.5V507.0 M394.5 524.5V500.0 M398.5 524.5V494.0 M402.5 524.5V494.0 M406.5 524.5V494.0 M410.5 524.5V501.0 M414.5 524.5V508.0 M418.5 524.5V512.0 M422.5 524.5V515.0 M426.5 524.5V516.0 M430.5 524.5V518.0 M434.5 524.5V528.0 M438.5 524.5V536.0 M442.5 524.5V539.0 M446.5 524.5V542.0 M450.5 524.5V544.0 M454.5 524.5V541.0 M458.5 524.5V536.0 M462.5 524.5V533.0 M466.5 524.5V531.0 M470.5 524.5V529.0 M474.5 524.5V527.0 M478.5 524.5V527.0 M482.5 524.5V527.0 M486.5 524.5V528.0 M490.5 524.5V527.0 M494.5 524.5V529.0 M498.5 524.5V537.0 M502.5 524.5V547.0 M506.5 524.5V551.0 M510.5 524.5V554.0 M514.5 524.5V557.0 M518.5 524.5V555.0 M522.5 524.5V551.0 M526.5 524.5V546.0 M530.5 524.5V541.0 M534.5 524.5V537.0 M538.5 524.5V533.0 M542.5 524.5V531.0 M546.5 524.5V525.0 M550.5 524.5V519.0 M554.5 524.5V518.0 M558.5 524.5V517.0 M562.5 524.5V514.0 M566.5 524.5V510.0 M570.5 524.5V507.0 M574.5 524.5V504.0 M578.5 524.5V498.0 M582.5 524.5V500.0 M586.5 524.5V502.0 M590.5 524.5V502.0 M594.5 524.5V490.0 M598.5 524.5V485.0 M602.5 524.5V480.0 M606.5 524.5V479.0 M610.5 524.5V476.0 M614.5 524.5V477.0 M618.5 524.5V481.0 M622.5 524.5V486.0 M626.5 524.5V494.0 M630.5 524.5V504.0 M634.5 524.5V510.0 M638.5 524.5V513.0" stroke="#c0c0c0" stroke-width="1" fill="none"/>
<polyline points="3.0,551.6 12.0,542.0 20.0,534.0 26.0,527.0 32.0,517.0 40.0,504.0 50.0,489.0 60.0,476.0 68.0,469.0 74.0,468.0 80.0,470.0 88.0,477.0 96.0,486.0 100.0,494.0 108.0,501.0 116.0,506.0 124.0,509.0 132.0,510.4 140.0,511.6 148.0,516.0 156.0,522.0 160.0,527.0 166.0,532.0 172.0,537.0 178.0,541.0 184.0,544.0 190.0,546.0 196.0,549.0 202.0,553.0 208.0,557.0 214.0,560.0 220.0,561.6 226.0,560.4 232.0,556.0 237.0,550.0 242.0,543.0 248.0,533.0 254.0,524.0 260.0,518.0 264.0,515.0 270.0,514.4 276.0,515.0 282.0,516.4 288.0,519.0 294.0,522.0 300.0,523.6 306.0,523.0 312.0,521.0 318.0,519.6 322.0,519.6 328.0,520.0 336.0,521.0 342.0,523.6 348.0,526.0 354.0,528.4 360.0,528.4 366.0,527.0 372.0,525.0 378.0,523.0 384.0,520.4 390.0,517.0 396.0,513.0 402.0,509.0 408.0,504.4 414.0,502.4 420.0,502.4 426.0,504.0 432.0,508.0 438.0,514.0 444.0,521.0 450.0,527.0 456.0,531.6 462.0,534.4 468.0,536.0 474.0,535.6 480.0,533.6 486.0,531.0 492.0,529.0 498.0,529.6 504.0,532.0 510.0,536.0 516.0,540.4 522.0,544.0 528.0,546.4 534.0,547.6 540.0,546.0 546.0,542.0 552.0,536.0 560.0,528.0 568.0,521.0 576.0,515.0 582.0,510.4 588.0,507.0 594.0,504.4 600.0,499.0 606.0,494.0 612.0,489.6 618.0,486.4 624.0,483.6 629.0,484.0 634.0,487.6 638.0,490.0" stroke="#ff0000" stroke-width="1.1" fill="none" stroke-dasharray="2.5 3" />
<path d="M2.5 2.5H747.5V447.5H2.5Z M2.5 449.5H747.5V579.5H2.5Z" stroke="#fff" stroke-width="1" fill="none" shape-rendering="crispEdges"/>
<text x="754" y="33.6" font-size="9.6" fill="#fff" textLength="31" lengthAdjust="spacingAndGlyphs">1.15655</text>
<text x="754" y="65.6" font-size="9.6" fill="#fff" textLength="31" lengthAdjust="spacingAndGlyphs">1.15290</text>
<text x="754" y="97.6" font-size="9.6" fill="#fff" textLength="31" lengthAdjust="spacingAndGlyphs">1.14925</text>
<text x="754" y="129.6" font-size="9.6" fill="#fff" textLength="31" lengthAdjust="spacingAndGlyphs">1.14560</text>
<text x="754" y="161.6" font-size="9.6" fill="#fff" textLength="31" lengthAdjust="spacingAndGlyphs">1.14195</text>
<text x="754" y="193.6" font-size="9.6" fill="#fff" textLength="31" lengthAdjust="spacingAndGlyphs">1.13830</text>
<text x="754" y="225.6" font-size="9.6" fill="#fff" textLength="31" lengthAdjust="spacingAndGlyphs">1.13465</text>
<text x="754" y="258.6" font-size="9.6" fill="#fff" textLength="31" lengthAdjust="spacingAndGlyphs">1.13100</text>
<text x="754" y="290.6" font-size="9.6" fill="#fff" textLength="31" lengthAdjust="spacingAndGlyphs">1.12735</text>
<text x="754" y="322.6" font-size="9.6" fill="#fff" textLength="31" lengthAdjust="spacingAndGlyphs">1.12370</text>
<text x="754" y="354.6" font-size="9.6" fill="#fff" textLength="31" lengthAdjust="spacingAndGlyphs">1.12005</text>
<text x="754" y="386.6" font-size="9.6" fill="#fff" textLength="31" lengthAdjust="spacingAndGlyphs">1.11640</text>
<text x="754" y="418.6" font-size="9.6" fill="#fff" textLength="31" lengthAdjust="spacingAndGlyphs">1.11275</text>
<path d="M748 30.5H752 M748 62.5H752 M748 94.5H752 M748 126.5H752 M748 158.5H752 M748 190.5H752 M748 222.5H752 M748 255.5H752 M748 287.5H752 M748 319.5H752 M748 351.5H752 M748 383.5H752 M748 415.5H752 M748 449.5H752 M748 579.5H752 M748 524.5H752" stroke="#fff" stroke-width="1" fill="none" shape-rendering="crispEdges"/>
<rect x="750" y="98" width="39" height="11" fill="#ff0000"/>
<text x="754" y="107" font-size="9.6" fill="#000" textLength="31" lengthAdjust="spacingAndGlyphs">1.14822</text>
<rect x="750" y="154" width="39" height="11" fill="#ff0000"/>
<text x="754" y="163" font-size="9.6" fill="#000" textLength="31" lengthAdjust="spacingAndGlyphs">1.14182</text>
<rect x="750" y="179" width="39" height="11" fill="#708090"/>
<text x="754" y="188" font-size="9.6" fill="#000" textLength="31" lengthAdjust="spacingAndGlyphs">1.13898</text>
<rect x="750" y="286" width="39" height="11" fill="#00ffff"/>
<text x="754" y="295" font-size="9.6" fill="#000" textLength="31" lengthAdjust="spacingAndGlyphs">1.12688</text>
<rect x="750" y="333" width="39" height="11" fill="#00ffff"/>
<text x="754" y="342" font-size="9.6" fill="#000" textLength="31" lengthAdjust="spacingAndGlyphs">1.12154</text>
<text x="753.3" y="458.2" font-size="9.6" fill="#fff" textLength="37" lengthAdjust="spacingAndGlyphs">0.004241</text>
<text x="753.3" y="527.1" font-size="9.6" fill="#fff" textLength="37" lengthAdjust="spacingAndGlyphs">0.000000</text>
<text x="753" y="577.2" font-size="9.6" fill="#fff" textLength="40.5" lengthAdjust="spacingAndGlyphs">-0.003084</text>
<text x="6.5" y="13" font-size="9.6" fill="#fff" textLength="54.5" lengthAdjust="spacingAndGlyphs">EURUSD,H4</text>
<text y="462" font-size="9.6" fill="#fff"><tspan x="6" textLength="65" lengthAdjust="spacingAndGlyphs">MACD(12,26,9)</tspan> <tspan x="75" textLength="37" lengthAdjust="spacingAndGlyphs">0.000635</tspan> <tspan x="116" textLength="37" lengthAdjust="spacingAndGlyphs">0.001860</tspan></text>
<text x="2.2" y="592" font-size="9.6" fill="#fff" textLength="52.5" lengthAdjust="spacingAndGlyphs">15 Nov 2018</text>
<text x="66.2" y="592" font-size="9.6" fill="#fff" textLength="56" lengthAdjust="spacingAndGlyphs">20 Nov 08:00</text>
<text x="130.2" y="592" font-size="9.6" fill="#fff" textLength="56" lengthAdjust="spacingAndGlyphs">23 Nov 00:00</text>
<text x="194.2" y="592" font-size="9.6" fill="#fff" textLength="56" lengthAdjust="spacingAndGlyphs">27 Nov 16:00</text>
<text x="258.2" y="592" font-size="9.6" fill="#fff" textLength="56" lengthAdjust="spacingAndGlyphs">30 Nov 08:00</text>
<text x="322.2" y="592" font-size="9.6" fill="#fff" textLength="49.2" lengthAdjust="spacingAndGlyphs">5 Dec 00:00</text>
<text x="386.2" y="592" font-size="9.6" fill="#fff" textLength="49" lengthAdjust="spacingAndGlyphs">7 Dec 16:00</text>
<text x="450.2" y="592" font-size="9.6" fill="#fff" textLength="53.75" lengthAdjust="spacingAndGlyphs">12 Dec 08:00</text>
<text x="514.2" y="592" font-size="9.6" fill="#fff" textLength="53.75" lengthAdjust="spacingAndGlyphs">17 Dec 00:00</text>
<text x="578.2" y="592" font-size="9.6" fill="#fff" textLength="53.25" lengthAdjust="spacingAndGlyphs">19 Dec 16:00</text>
<path d="M2.5 580V583 M66.5 580V583 M130.5 580V583 M194.5 580V583 M258.5 580V583 M322.5 580V583 M386.5 580V583 M450.5 580V583 M514.5 580V583 M578.5 580V583" stroke="#fff" stroke-width="1" fill="none" shape-rendering="crispEdges"/>
</svg>
</body></html>
